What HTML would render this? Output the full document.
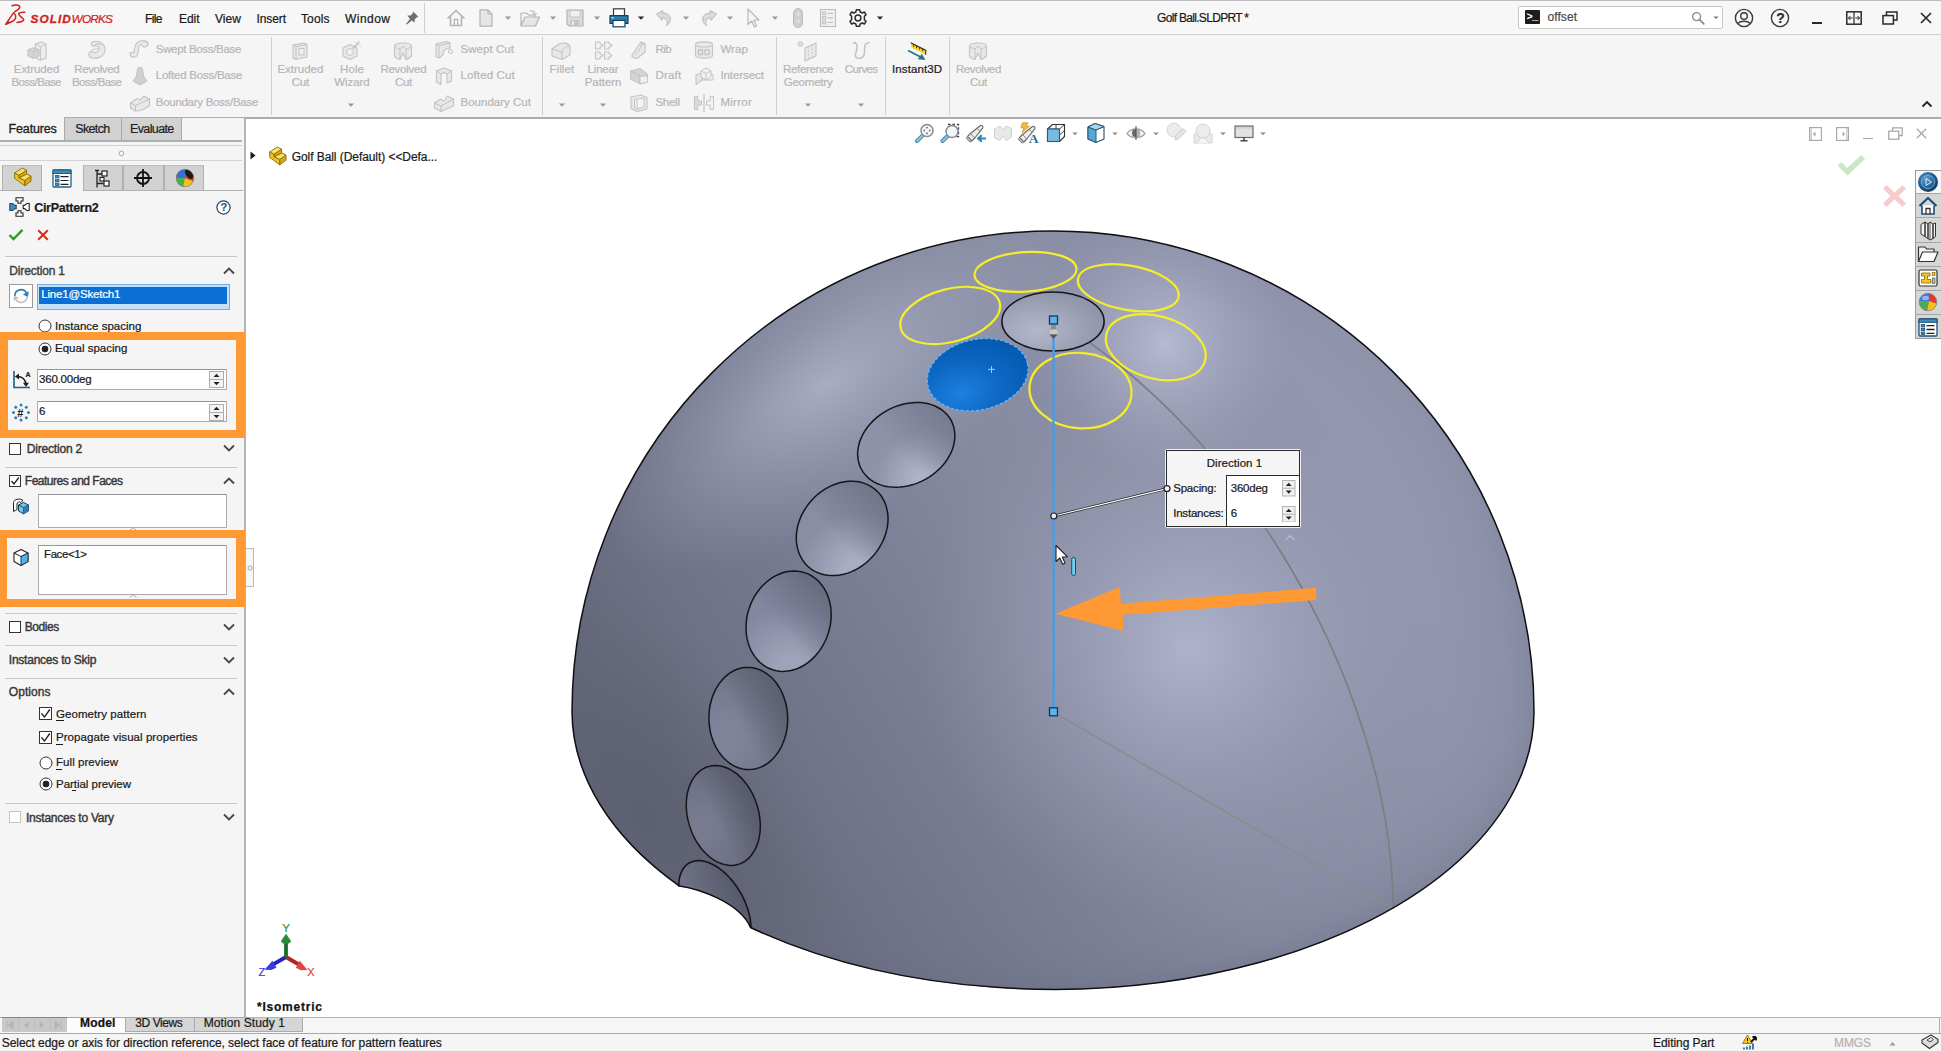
<!DOCTYPE html>
<html lang="en"><head><meta charset="utf-8"><title>Golf Ball.SLDPRT - SOLIDWORKS</title>
<style>
*{box-sizing:border-box;margin:0;padding:0}
html,body{width:1941px;height:1051px;overflow:hidden;background:#fff}
body{font-family:"Liberation Sans",sans-serif;font-size:12px;color:#1a1a1a;position:relative}
.abs,.t{position:absolute}
.t{white-space:nowrap;line-height:1;-webkit-text-stroke-width:0.22px}
#scene{position:absolute;left:0;top:0}
#titlebar{position:absolute;left:0;top:0;width:1941px;height:35px;background:#f7f7f7;border-top:1px solid #bdbdbd;border-bottom:1px solid #cfcfcf}
#ribbon{position:absolute;left:0;top:35px;width:1941px;height:84px;background:#f5f5f5;border-bottom:2px solid #adadad}
#left{position:absolute;left:0;top:118px;width:246px;height:898.5px;background:#f5f5f5;border-right:2px solid #b4b4b4}
#btabs{position:absolute;left:0;top:1016.5px;width:1941px;height:16.5px;background:#f6f6f6;border-top:1px solid #a8a8a8}
#status{position:absolute;left:0;top:1033px;width:1941px;height:18px;background:#f5f5f5;border-top:1px solid #a8a8a8}
.dis{color:#b7b7b7}
.menu{font-size:13px;color:#1a1a1a;top:12px}
.rt{font-size:12.5px;color:#b9b9b9;text-align:center;line-height:13.5px;white-space:nowrap}
.sep{position:absolute;width:1px;background:#cfcfcf}
.sec{font-weight:bold;font-size:12px;color:#3c3c3c}
.hl{position:absolute;left:4px;width:235px;height:1px;background:#c9c9c9}
.lbl{font-size:12px;color:#1a1a1a}
.inp{position:absolute;background:#fff;border:1px solid #a9a9ae;border-top-color:#94949a}
.chev{position:absolute;width:12px;height:8px}
</style></head><body>

<svg id="scene" width="1941" height="1051" viewBox="0 0 1941 1051">
<defs>
<linearGradient id="gBase" gradientUnits="userSpaceOnUse" x1="1430" y1="380" x2="610" y2="880">
<stop offset="0" stop-color="#969ab2"/><stop offset="0.45" stop-color="#858aa1"/><stop offset="0.8" stop-color="#6e7185"/><stop offset="1" stop-color="#5b5e6d"/>
</linearGradient>
<radialGradient id="gH1" gradientUnits="userSpaceOnUse" cx="1190" cy="648" r="275">
<stop offset="0" stop-color="#b2b6ce" stop-opacity="0.92"/><stop offset="0.45" stop-color="#a3a7bf" stop-opacity="0.5"/><stop offset="1" stop-color="#9397ae" stop-opacity="0"/>
</radialGradient>
<radialGradient id="gH2" gradientUnits="userSpaceOnUse" cx="1165" cy="345" r="130">
<stop offset="0" stop-color="#babed6" stop-opacity="0.9"/><stop offset="1" stop-color="#a0a4bc" stop-opacity="0"/>
</radialGradient>
<radialGradient id="gH3" gradientUnits="userSpaceOnUse" cx="0" cy="0" r="1" gradientTransform="translate(828 384) rotate(-33) scale(275 135)">
<stop offset="0" stop-color="#adb1c7" stop-opacity="0.9"/><stop offset="0.5" stop-color="#a2a6bc" stop-opacity="0.45"/><stop offset="1" stop-color="#9a9eb4" stop-opacity="0"/>
</radialGradient>
<radialGradient id="gD1" gradientUnits="userSpaceOnUse" cx="0" cy="0" r="1" gradientTransform="translate(640 820) rotate(-35) scale(160 300)">
<stop offset="0" stop-color="#555865" stop-opacity="0.6"/><stop offset="1" stop-color="#5b5e6e" stop-opacity="0"/>
</radialGradient>
<radialGradient id="gRim" gradientUnits="userSpaceOnUse" cx="0" cy="0" r="481" gradientTransform="translate(1053 712) scale(1 1.12)">
<stop offset="0" stop-color="#70748a" stop-opacity="0"/><stop offset="0.82" stop-color="#70748a" stop-opacity="0"/><stop offset="0.94" stop-color="#6c7086" stop-opacity="0.16"/><stop offset="1" stop-color="#666a80" stop-opacity="0.34"/>
</radialGradient>
<radialGradient id="gRim2" gradientUnits="userSpaceOnUse" cx="0" cy="0" r="481" gradientTransform="translate(1053 712) scale(1 0.5774)">
<stop offset="0" stop-color="#70748a" stop-opacity="0"/><stop offset="0.82" stop-color="#70748a" stop-opacity="0"/><stop offset="0.94" stop-color="#6c7086" stop-opacity="0.16"/><stop offset="1" stop-color="#666a80" stop-opacity="0.34"/>
</radialGradient>
<clipPath id="clipS"><path id="hemi" d="M572 712 A481 481 0 0 1 1534 712 A481 277.7 0 0 1 572 712Z"/></clipPath>
<linearGradient id="gDim" x1="0" y1="0" x2="1" y2="1">
<stop offset="0" stop-color="#7a7e92"/><stop offset="0.55" stop-color="#8b8fa6"/><stop offset="1" stop-color="#a9adc4"/>
</linearGradient>
<radialGradient id="gBlue" cx="0.3" cy="0.7" r="0.8">
<stop offset="0" stop-color="#1f80e0"/><stop offset="0.5" stop-color="#0d68c4"/><stop offset="1" stop-color="#0458ae"/>
</radialGradient>
<radialGradient id="gPole" cx="0.35" cy="0.65" r="0.7">
<stop offset="0" stop-color="#b4b8cc"/><stop offset="1" stop-color="#8f93a8"/>
</radialGradient>
</defs>
<g clip-path="url(#clipS)">
<rect x="560" y="220" width="990" height="780" fill="url(#gBase)"/>
<rect x="560" y="220" width="990" height="780" fill="url(#gD1)"/>
<rect x="560" y="220" width="990" height="780" fill="url(#gH3)"/>
<rect x="560" y="220" width="990" height="780" fill="url(#gH1)"/>
<rect x="560" y="220" width="990" height="780" fill="url(#gH2)"/>
<rect x="560" y="220" width="990" height="492" fill="url(#gRim)"/>
<rect x="560" y="712" width="990" height="290" fill="url(#gRim2)"/>
</g>
<path d="M750.5 927.5 C740 903 700 889 679.5 886 L670 900 L700 940 L745 945Z" fill="#fff"/>
<path d="M1053.0 319.3 L1070.8 330.1 L1088.6 341.9 L1106.2 354.8 L1123.7 368.7 L1141.0 383.5 L1158.1 399.2 L1174.9 415.7 L1191.3 433.1 L1207.4 451.2 L1223.1 470.1 L1238.2 489.6 L1252.9 509.7 L1267.0 530.4 L1280.6 551.5 L1293.5 573.1 L1305.8 595.1 L1317.3 617.5 L1328.2 640.0 L1338.2 662.8 L1347.6 685.7 L1356.0 708.7 L1363.7 731.7 L1370.5 754.6 L1376.5 777.4 L1381.5 800.0 L1385.7 822.4 L1388.9 844.5 L1391.3 866.2 L1392.7 887.5 L1393.1 908.4" fill="none" stroke="#7e7e82" stroke-width="1.7"/>
<path d="M1053 712 L1393.1 908.4" fill="none" stroke="#8c8c8a" stroke-width="1.6"/>
<ellipse cx="1053.0" cy="321.5" rx="51.1" ry="29.5" transform="rotate(0.0 1053.0 321.5)" fill="url(#gPole)" stroke="#15151a" stroke-width="1.6"/>
<ellipse cx="977.7" cy="374.7" rx="51.1" ry="35.3" transform="rotate(-12.6 977.7 374.7)" fill="url(#gBlue)" stroke="#5fb4ee" stroke-width="1.5" stroke-dasharray="3 2"/>
<radialGradient id="gd2" gradientUnits="userSpaceOnUse" cx="928.1" cy="483.0" r="53.0"><stop offset="0" stop-color="#b0b4ca"/><stop offset="0.2" stop-color="#b0b4ca"/><stop offset="1" stop-color="#8f93a9"/></radialGradient>
<linearGradient id="go2" gradientUnits="userSpaceOnUse" x1="942.7" y1="413.1" x2="900.8" y2="453.9"><stop offset="0" stop-color="#787c91" stop-opacity="1"/><stop offset="0.45" stop-color="#787c91" stop-opacity="0.55"/><stop offset="1" stop-color="#787c91" stop-opacity="0"/></linearGradient>
<path d="M938.8 408.0 L935.6 406.3 L932.1 404.9 L928.4 403.8 L924.5 403.1 L920.5 402.6 L916.4 402.5 L912.2 402.7 L908.0 403.2 L903.7 404.0 L899.5 405.2 L895.3 406.6 L891.2 408.4 L887.3 410.4 L883.4 412.6 L879.8 415.2 L876.3 417.9 L873.1 420.9 L870.1 424.0 L867.4 427.3 L865.0 430.7 L862.9 434.3 L861.2 437.9 L859.7 441.6 L858.7 445.3 L858.0 449.0 L857.6 452.6 L857.7 456.2 L858.1 459.7 L858.9 463.1 L860.0 466.4 L861.5 469.5 L863.3 472.4 L865.5 475.1 L867.9 477.6 L870.7 479.8 L873.7 481.8 L877.0 483.5 L880.5 484.9 L884.2 485.9 L888.0 486.7 L892.0 487.1 L896.1 487.3 L900.3 487.1 L904.6 486.6 L908.8 485.7 L913.0 484.6 L917.2 483.1 L921.3 481.4 L925.3 479.4 L929.1 477.1 L932.7 474.6 L936.2 471.8 L939.4 468.9 L942.4 465.7 L945.1 462.5 L947.5 459.0 L949.6 455.5 L951.4 451.9 L952.8 448.2 L953.8 444.5 L954.5 440.8 L954.9 437.1 L954.8 433.5 L954.4 430.0 L953.7 426.6 L952.5 423.4 L951.1 420.2 L949.2 417.3 L947.1 414.6 L944.6 412.2 L941.9 409.9Z" fill="url(#gd2)"/>
<path d="M938.8 408.0 L935.6 406.3 L932.1 404.9 L928.4 403.8 L924.5 403.1 L920.5 402.6 L916.4 402.5 L912.2 402.7 L908.0 403.2 L903.7 404.0 L899.5 405.2 L895.3 406.6 L891.2 408.4 L887.3 410.4 L883.4 412.6 L879.8 415.2 L876.3 417.9 L873.1 420.9 L870.1 424.0 L867.4 427.3 L865.0 430.7 L862.9 434.3 L861.2 437.9 L859.7 441.6 L858.7 445.3 L858.0 449.0 L857.6 452.6 L857.7 456.2 L858.1 459.7 L858.9 463.1 L860.0 466.4 L861.5 469.5 L863.3 472.4 L865.5 475.1 L867.9 477.6 L870.7 479.8 L873.7 481.8 L877.0 483.5 L880.5 484.9 L884.2 485.9 L888.0 486.7 L892.0 487.1 L896.1 487.3 L900.3 487.1 L904.6 486.6 L908.8 485.7 L913.0 484.6 L917.2 483.1 L921.3 481.4 L925.3 479.4 L929.1 477.1 L932.7 474.6 L936.2 471.8 L939.4 468.9 L942.4 465.7 L945.1 462.5 L947.5 459.0 L949.6 455.5 L951.4 451.9 L952.8 448.2 L953.8 444.5 L954.5 440.8 L954.9 437.1 L954.8 433.5 L954.4 430.0 L953.7 426.6 L952.5 423.4 L951.1 420.2 L949.2 417.3 L947.1 414.6 L944.6 412.2 L941.9 409.9Z" fill="url(#go2)" stroke="#15151a" stroke-width="1.5"/>
<radialGradient id="gd3" gradientUnits="userSpaceOnUse" cx="858.2" cy="571.8" r="59.0"><stop offset="0" stop-color="#aaaec4"/><stop offset="0.2" stop-color="#aaaec4"/><stop offset="1" stop-color="#8a8ea4"/></radialGradient>
<linearGradient id="go3" gradientUnits="userSpaceOnUse" x1="878.8" y1="495.4" x2="836.6" y2="538.1"><stop offset="0" stop-color="#72768a" stop-opacity="1"/><stop offset="0.45" stop-color="#72768a" stop-opacity="0.55"/><stop offset="1" stop-color="#72768a" stop-opacity="0"/></linearGradient>
<path d="M870.4 486.1 L867.1 484.4 L863.7 483.1 L860.1 482.1 L856.3 481.5 L852.5 481.2 L848.5 481.3 L844.6 481.8 L840.6 482.6 L836.6 483.7 L832.6 485.2 L828.7 487.1 L825.0 489.2 L821.3 491.6 L817.8 494.3 L814.5 497.3 L811.5 500.5 L808.6 503.9 L806.0 507.6 L803.7 511.3 L801.6 515.2 L799.9 519.2 L798.5 523.3 L797.4 527.4 L796.7 531.5 L796.3 535.6 L796.3 539.7 L796.6 543.6 L797.3 547.4 L798.3 551.1 L799.6 554.7 L801.3 558.0 L803.2 561.1 L805.5 563.9 L808.0 566.5 L810.8 568.8 L813.9 570.8 L817.1 572.4 L820.6 573.7 L824.2 574.7 L827.9 575.3 L831.8 575.6 L835.7 575.5 L839.7 575.1 L843.7 574.3 L847.7 573.1 L851.7 571.6 L855.5 569.8 L859.3 567.7 L863.0 565.2 L866.4 562.5 L869.7 559.5 L872.8 556.3 L875.7 552.9 L878.3 549.3 L880.6 545.5 L882.6 541.6 L884.4 537.6 L885.8 533.6 L886.8 529.4 L887.6 525.3 L888.0 521.2 L888.0 517.2 L887.7 513.2 L887.0 509.4 L886.0 505.7 L884.7 502.2 L883.0 498.9 L881.1 495.8 L878.8 492.9 L876.2 490.4 L873.4 488.1Z" fill="url(#gd3)"/>
<path d="M870.4 486.1 L867.1 484.4 L863.7 483.1 L860.1 482.1 L856.3 481.5 L852.5 481.2 L848.5 481.3 L844.6 481.8 L840.6 482.6 L836.6 483.7 L832.6 485.2 L828.7 487.1 L825.0 489.2 L821.3 491.6 L817.8 494.3 L814.5 497.3 L811.5 500.5 L808.6 503.9 L806.0 507.6 L803.7 511.3 L801.6 515.2 L799.9 519.2 L798.5 523.3 L797.4 527.4 L796.7 531.5 L796.3 535.6 L796.3 539.7 L796.6 543.6 L797.3 547.4 L798.3 551.1 L799.6 554.7 L801.3 558.0 L803.2 561.1 L805.5 563.9 L808.0 566.5 L810.8 568.8 L813.9 570.8 L817.1 572.4 L820.6 573.7 L824.2 574.7 L827.9 575.3 L831.8 575.6 L835.7 575.5 L839.7 575.1 L843.7 574.3 L847.7 573.1 L851.7 571.6 L855.5 569.8 L859.3 567.7 L863.0 565.2 L866.4 562.5 L869.7 559.5 L872.8 556.3 L875.7 552.9 L878.3 549.3 L880.6 545.5 L882.6 541.6 L884.4 537.6 L885.8 533.6 L886.8 529.4 L887.6 525.3 L888.0 521.2 L888.0 517.2 L887.7 513.2 L887.0 509.4 L886.0 505.7 L884.7 502.2 L883.0 498.9 L881.1 495.8 L878.8 492.9 L876.2 490.4 L873.4 488.1Z" fill="url(#go3)" stroke="#15151a" stroke-width="1.5"/>
<radialGradient id="gd4" gradientUnits="userSpaceOnUse" cx="790.7" cy="668.8" r="62.7"><stop offset="0" stop-color="#9fa3b9"/><stop offset="0.2" stop-color="#9fa3b9"/><stop offset="1" stop-color="#8387a0"/></radialGradient>
<linearGradient id="go4" gradientUnits="userSpaceOnUse" x1="824.8" y1="591.1" x2="783.2" y2="630.7"><stop offset="0" stop-color="#696c80" stop-opacity="1"/><stop offset="0.45" stop-color="#696c80" stop-opacity="0.55"/><stop offset="1" stop-color="#696c80" stop-opacity="0"/></linearGradient>
<path d="M811.1 575.5 L807.9 573.9 L804.5 572.6 L801.0 571.7 L797.4 571.2 L793.7 571.0 L790.0 571.2 L786.3 571.8 L782.6 572.8 L779.0 574.2 L775.4 575.9 L771.9 577.9 L768.6 580.3 L765.4 583.0 L762.3 586.0 L759.5 589.2 L756.9 592.7 L754.5 596.4 L752.4 600.3 L750.6 604.4 L749.1 608.6 L747.8 612.8 L746.9 617.2 L746.3 621.6 L746.0 625.9 L746.1 630.3 L746.4 634.5 L747.1 638.7 L748.1 642.7 L749.4 646.6 L751.0 650.3 L752.9 653.7 L755.1 656.9 L757.5 659.9 L760.1 662.5 L763.0 664.8 L766.1 666.8 L769.3 668.5 L772.7 669.7 L776.2 670.7 L779.8 671.2 L783.4 671.4 L787.1 671.1 L790.9 670.5 L794.6 669.6 L798.2 668.2 L801.8 666.5 L805.3 664.4 L808.6 662.1 L811.8 659.4 L814.8 656.4 L817.7 653.1 L820.3 649.7 L822.6 645.9 L824.7 642.0 L826.6 638.0 L828.1 633.8 L829.3 629.5 L830.3 625.2 L830.9 620.8 L831.2 616.4 L831.1 612.1 L830.8 607.8 L830.1 603.7 L829.1 599.6 L827.8 595.8 L826.2 592.1 L824.3 588.6 L822.1 585.4 L819.7 582.5 L817.1 579.9 L814.2 577.5Z" fill="url(#gd4)"/>
<path d="M811.1 575.5 L807.9 573.9 L804.5 572.6 L801.0 571.7 L797.4 571.2 L793.7 571.0 L790.0 571.2 L786.3 571.8 L782.6 572.8 L779.0 574.2 L775.4 575.9 L771.9 577.9 L768.6 580.3 L765.4 583.0 L762.3 586.0 L759.5 589.2 L756.9 592.7 L754.5 596.4 L752.4 600.3 L750.6 604.4 L749.1 608.6 L747.8 612.8 L746.9 617.2 L746.3 621.6 L746.0 625.9 L746.1 630.3 L746.4 634.5 L747.1 638.7 L748.1 642.7 L749.4 646.6 L751.0 650.3 L752.9 653.7 L755.1 656.9 L757.5 659.9 L760.1 662.5 L763.0 664.8 L766.1 666.8 L769.3 668.5 L772.7 669.7 L776.2 670.7 L779.8 671.2 L783.4 671.4 L787.1 671.1 L790.9 670.5 L794.6 669.6 L798.2 668.2 L801.8 666.5 L805.3 664.4 L808.6 662.1 L811.8 659.4 L814.8 656.4 L817.7 653.1 L820.3 649.7 L822.6 645.9 L824.7 642.0 L826.6 638.0 L828.1 633.8 L829.3 629.5 L830.3 625.2 L830.9 620.8 L831.2 616.4 L831.1 612.1 L830.8 607.8 L830.1 603.7 L829.1 599.6 L827.8 595.8 L826.2 592.1 L824.3 588.6 L822.1 585.4 L819.7 582.5 L817.1 579.9 L814.2 577.5Z" fill="url(#go4)" stroke="#15151a" stroke-width="1.5"/>
<radialGradient id="gd5" gradientUnits="userSpaceOnUse" cx="724.7" cy="736.4" r="63.9"><stop offset="0" stop-color="#80849a"/><stop offset="0.2" stop-color="#80849a"/><stop offset="1" stop-color="#72758a"/></radialGradient>
<linearGradient id="go5" gradientUnits="userSpaceOnUse" x1="785.7" y1="703.2" x2="742.7" y2="725.9"><stop offset="0" stop-color="#5d6071" stop-opacity="1"/><stop offset="0.45" stop-color="#5d6071" stop-opacity="0.55"/><stop offset="1" stop-color="#5d6071" stop-opacity="0"/></linearGradient>
<path d="M764.0 671.8 L760.8 670.2 L757.5 668.9 L754.1 668.0 L750.7 667.5 L747.2 667.4 L743.8 667.6 L740.4 668.3 L737.1 669.3 L733.8 670.7 L730.7 672.5 L727.7 674.6 L724.8 677.1 L722.2 679.9 L719.7 682.9 L717.4 686.3 L715.4 689.8 L713.7 693.6 L712.2 697.6 L710.9 701.8 L710.0 706.0 L709.3 710.4 L709.0 714.8 L708.9 719.3 L709.2 723.7 L709.7 728.1 L710.5 732.5 L711.7 736.7 L713.1 740.8 L714.7 744.7 L716.6 748.5 L718.8 751.9 L721.2 755.2 L723.8 758.1 L726.6 760.8 L729.5 763.1 L732.6 765.1 L735.8 766.8 L739.1 768.1 L742.5 768.9 L745.9 769.5 L749.4 769.6 L752.8 769.3 L756.2 768.7 L759.5 767.6 L762.8 766.2 L765.9 764.5 L768.9 762.3 L771.8 759.9 L774.4 757.1 L776.9 754.0 L779.2 750.7 L781.2 747.1 L782.9 743.3 L784.4 739.3 L785.7 735.2 L786.6 730.9 L787.3 726.6 L787.6 722.1 L787.7 717.7 L787.4 713.2 L786.9 708.8 L786.1 704.5 L784.9 700.2 L783.5 696.2 L781.9 692.2 L780.0 688.5 L777.8 685.0 L775.4 681.8 L772.8 678.8 L770.0 676.2 L767.1 673.8Z" fill="url(#gd5)"/>
<path d="M764.0 671.8 L760.8 670.2 L757.5 668.9 L754.1 668.0 L750.7 667.5 L747.2 667.4 L743.8 667.6 L740.4 668.3 L737.1 669.3 L733.8 670.7 L730.7 672.5 L727.7 674.6 L724.8 677.1 L722.2 679.9 L719.7 682.9 L717.4 686.3 L715.4 689.8 L713.7 693.6 L712.2 697.6 L710.9 701.8 L710.0 706.0 L709.3 710.4 L709.0 714.8 L708.9 719.3 L709.2 723.7 L709.7 728.1 L710.5 732.5 L711.7 736.7 L713.1 740.8 L714.7 744.7 L716.6 748.5 L718.8 751.9 L721.2 755.2 L723.8 758.1 L726.6 760.8 L729.5 763.1 L732.6 765.1 L735.8 766.8 L739.1 768.1 L742.5 768.9 L745.9 769.5 L749.4 769.6 L752.8 769.3 L756.2 768.7 L759.5 767.6 L762.8 766.2 L765.9 764.5 L768.9 762.3 L771.8 759.9 L774.4 757.1 L776.9 754.0 L779.2 750.7 L781.2 747.1 L782.9 743.3 L784.4 739.3 L785.7 735.2 L786.6 730.9 L787.3 726.6 L787.6 722.1 L787.7 717.7 L787.4 713.2 L786.9 708.8 L786.1 704.5 L784.9 700.2 L783.5 696.2 L781.9 692.2 L780.0 688.5 L777.8 685.0 L775.4 681.8 L772.8 678.8 L770.0 676.2 L767.1 673.8Z" fill="url(#go5)" stroke="#15151a" stroke-width="1.5"/>
<radialGradient id="gd6" gradientUnits="userSpaceOnUse" cx="701.1" cy="827.9" r="62.4"><stop offset="0" stop-color="#787b90"/><stop offset="0.2" stop-color="#787b90"/><stop offset="1" stop-color="#6a6d80"/></radialGradient>
<linearGradient id="go6" gradientUnits="userSpaceOnUse" x1="758.4" y1="803.0" x2="718.0" y2="822.3"><stop offset="0" stop-color="#565969" stop-opacity="1"/><stop offset="0.45" stop-color="#565969" stop-opacity="0.55"/><stop offset="1" stop-color="#565969" stop-opacity="0"/></linearGradient>
<path d="M731.3 770.1 L728.1 768.5 L724.9 767.2 L721.7 766.3 L718.5 765.7 L715.3 765.6 L712.2 765.8 L709.1 766.4 L706.2 767.3 L703.4 768.7 L700.8 770.3 L698.3 772.4 L696.0 774.7 L693.9 777.4 L692.1 780.4 L690.5 783.6 L689.1 787.0 L688.0 790.7 L687.1 794.6 L686.6 798.6 L686.3 802.8 L686.3 807.0 L686.6 811.4 L687.1 815.7 L688.0 820.1 L689.1 824.4 L690.4 828.6 L692.0 832.8 L693.9 836.8 L696.0 840.6 L698.3 844.3 L700.7 847.7 L703.4 850.9 L706.2 853.8 L709.1 856.5 L712.1 858.8 L715.2 860.8 L718.4 862.4 L721.6 863.7 L724.9 864.6 L728.1 865.2 L731.3 865.4 L734.4 865.2 L737.4 864.6 L740.4 863.6 L743.2 862.3 L745.8 860.6 L748.3 858.6 L750.6 856.2 L752.6 853.5 L754.5 850.6 L756.1 847.4 L757.5 843.9 L758.6 840.2 L759.4 836.3 L760.0 832.3 L760.3 828.1 L760.3 823.9 L760.0 819.6 L759.4 815.2 L758.6 810.9 L757.5 806.6 L756.1 802.3 L754.5 798.2 L752.7 794.2 L750.6 790.3 L748.3 786.6 L745.8 783.2 L743.2 780.0 L740.4 777.1 L737.5 774.4 L734.4 772.1Z" fill="url(#gd6)"/>
<path d="M731.3 770.1 L728.1 768.5 L724.9 767.2 L721.7 766.3 L718.5 765.7 L715.3 765.6 L712.2 765.8 L709.1 766.4 L706.2 767.3 L703.4 768.7 L700.8 770.3 L698.3 772.4 L696.0 774.7 L693.9 777.4 L692.1 780.4 L690.5 783.6 L689.1 787.0 L688.0 790.7 L687.1 794.6 L686.6 798.6 L686.3 802.8 L686.3 807.0 L686.6 811.4 L687.1 815.7 L688.0 820.1 L689.1 824.4 L690.4 828.6 L692.0 832.8 L693.9 836.8 L696.0 840.6 L698.3 844.3 L700.7 847.7 L703.4 850.9 L706.2 853.8 L709.1 856.5 L712.1 858.8 L715.2 860.8 L718.4 862.4 L721.6 863.7 L724.9 864.6 L728.1 865.2 L731.3 865.4 L734.4 865.2 L737.4 864.6 L740.4 863.6 L743.2 862.3 L745.8 860.6 L748.3 858.6 L750.6 856.2 L752.6 853.5 L754.5 850.6 L756.1 847.4 L757.5 843.9 L758.6 840.2 L759.4 836.3 L760.0 832.3 L760.3 828.1 L760.3 823.9 L760.0 819.6 L759.4 815.2 L758.6 810.9 L757.5 806.6 L756.1 802.3 L754.5 798.2 L752.7 794.2 L750.6 790.3 L748.3 786.6 L745.8 783.2 L743.2 780.0 L740.4 777.1 L737.5 774.4 L734.4 772.1Z" fill="url(#go6)" stroke="#15151a" stroke-width="1.5"/>
<linearGradient id="gd7" gradientUnits="userSpaceOnUse" x1="745" y1="880" x2="690" y2="900"><stop offset="0" stop-color="#535667"/><stop offset="0.5" stop-color="#606375"/><stop offset="1" stop-color="#6f7286"/></linearGradient>
<path d="M750.9 928.1 L750.9 926.3 L750.8 924.4 L750.6 922.5 L750.4 920.6 L750.1 918.6 L749.7 916.6 L749.3 914.6 L748.8 912.6 L748.2 910.6 L747.6 908.5 L746.9 906.5 L746.1 904.5 L745.3 902.4 L744.4 900.4 L743.5 898.4 L742.5 896.4 L741.5 894.4 L740.4 892.5 L739.2 890.6 L738.0 888.7 L736.8 886.8 L735.5 885.0 L734.2 883.3 L732.9 881.5 L731.5 879.9 L730.1 878.3 L728.6 876.7 L727.2 875.2 L725.7 873.7 L724.2 872.3 L722.6 871.0 L721.1 869.8 L719.5 868.6 L718.0 867.5 L716.4 866.5 L714.8 865.5 L713.2 864.7 L711.7 863.9 L710.1 863.2 L708.5 862.5 L707.0 862.0 L705.5 861.5 L703.9 861.2 L702.4 860.9 L701.0 860.7 L699.5 860.6 L698.1 860.6 L696.7 860.7 L695.4 860.8 L694.1 861.1 L692.8 861.4 L691.6 861.9 L690.4 862.4 L689.3 863.0 L688.2 863.7 L687.1 864.4 L686.1 865.3 L685.2 866.2 L684.3 867.2 L683.5 868.3 L682.7 869.5 L682.1 870.7 L681.4 872.0 L680.8 873.4 L680.3 874.8 L679.9 876.3 L679.5 877.9 L679.2 879.5 L679.0 881.1 L678.8 882.8 L678.7 884.6 L678.7 886.4 C700 889 740 903 750.5 927 Z" fill="url(#gd7)" stroke="none"/>
<path d="M750.9 928.1 L750.9 926.3 L750.8 924.4 L750.6 922.5 L750.4 920.6 L750.1 918.6 L749.7 916.6 L749.3 914.6 L748.8 912.6 L748.2 910.6 L747.6 908.5 L746.9 906.5 L746.1 904.5 L745.3 902.4 L744.4 900.4 L743.5 898.4 L742.5 896.4 L741.5 894.4 L740.4 892.5 L739.2 890.6 L738.0 888.7 L736.8 886.8 L735.5 885.0 L734.2 883.3 L732.9 881.5 L731.5 879.9 L730.1 878.3 L728.6 876.7 L727.2 875.2 L725.7 873.7 L724.2 872.3 L722.6 871.0 L721.1 869.8 L719.5 868.6 L718.0 867.5 L716.4 866.5 L714.8 865.5 L713.2 864.7 L711.7 863.9 L710.1 863.2 L708.5 862.5 L707.0 862.0 L705.5 861.5 L703.9 861.2 L702.4 860.9 L701.0 860.7 L699.5 860.6 L698.1 860.6 L696.7 860.7 L695.4 860.8 L694.1 861.1 L692.8 861.4 L691.6 861.9 L690.4 862.4 L689.3 863.0 L688.2 863.7 L687.1 864.4 L686.1 865.3 L685.2 866.2 L684.3 867.2 L683.5 868.3 L682.7 869.5 L682.1 870.7 L681.4 872.0 L680.8 873.4 L680.3 874.8 L679.9 876.3 L679.5 877.9 L679.2 879.5 L679.0 881.1 L678.8 882.8 L678.7 884.6 L678.7 886.4" fill="none" stroke="#15151a" stroke-width="1.6"/>
<ellipse cx="1080.5" cy="390.6" rx="51.1" ry="37.7" transform="rotate(4.9 1080.5 390.6)" fill="none" stroke="#f4ee2a" stroke-width="2.2"/>
<ellipse cx="1155.8" cy="347.2" rx="51.1" ry="31.2" transform="rotate(15.7 1155.8 347.2)" fill="none" stroke="#f4ee2a" stroke-width="2.2"/>
<ellipse cx="1128.3" cy="287.8" rx="51.1" ry="22.2" transform="rotate(10.1 1128.3 287.8)" fill="none" stroke="#f4ee2a" stroke-width="2.2"/>
<ellipse cx="1025.5" cy="271.9" rx="51.1" ry="19.8" transform="rotate(-3.6 1025.5 271.9)" fill="none" stroke="#f4ee2a" stroke-width="2.2"/>
<ellipse cx="950.2" cy="315.4" rx="51.1" ry="26.4" transform="rotate(-14.5 950.2 315.4)" fill="none" stroke="#f4ee2a" stroke-width="2.2"/>
<path d="M572 712 A481 481 0 0 1 1534 712 A481 277.7 0 0 1 750.5 927.5 C740 903 700 889 679.5 886 A481 277.7 0 0 1 572 712Z" fill="none" stroke="#101014" stroke-width="1.5"/>
<path d="M1053.5 338 V708" stroke="#4a9be6" stroke-width="2.4"/>
</svg>
<div id="titlebar"></div><div id="ribbon"></div>
<svg class="abs" style="left:0;top:0" width="30" height="30" viewBox="0 0 30 30"><g fill="none" stroke="#d0241c" stroke-width="1.5" stroke-linecap="round" stroke-linejoin="round">
<path d="M12 5.800 C15 4.500 19.400 4.700 19.800 7 C20 8.600 17 10.400 14.700 11.800"/>
<path d="M13.500 12.800 L5.600 24.400 C9 22.800 13 21.500 14.800 19.400 C16.500 17.300 15.700 14.200 13.500 12.800Z"/>
<path d="M24.800 12.300 C22.500 12.200 19.500 12.500 18.700 13.700 C17.900 15.300 22.800 17.600 23.600 19.500 C24.100 21.200 20.200 22.300 17 22.500"/></g><path d="M5.600 24.400 L8.200 20.400 L9.600 22.400Z" fill="#d0241c"/></svg>
<div class="t " style="left:30.6px;top:13.7px;font-size:11.8px;color:#d0241c;letter-spacing:1.036px;font-weight:bold;font-style:italic;-webkit-text-stroke:0.3px #d0241c;">SOLID</div>
<div class="t " style="left:71.6px;top:13.7px;font-size:11.8px;color:#d0241c;letter-spacing:-0.795px;font-style:italic;">WORKS</div>
<div class="t " style="left:145.0px;top:13.0px;font-size:12px;color:#1a1a1a;letter-spacing:-0.612px;">File</div>
<div class="t " style="left:179.0px;top:13.0px;font-size:12px;color:#1a1a1a;letter-spacing:-0.059px;">Edit</div>
<div class="t " style="left:215.0px;top:13.0px;font-size:12px;color:#1a1a1a;letter-spacing:0.069px;">View</div>
<div class="t " style="left:256.5px;top:13.0px;font-size:12px;color:#1a1a1a;letter-spacing:-0.102px;">Insert</div>
<div class="t " style="left:301.0px;top:13.0px;font-size:12px;color:#1a1a1a;letter-spacing:0.122px;">Tools</div>
<div class="t " style="left:345.0px;top:13.0px;font-size:12px;color:#1a1a1a;letter-spacing:0.464px;">Window</div>
<svg class="abs" style="left:404px;top:10px" width="16" height="16" viewBox="0 0 16 16"><path d="M9.2 1.6 L14.4 6.8 L12.6 7.4 L10.6 9.6 L10.8 12.6 L7.6 10.4 L3 14.6 L2 14 L6 9 L3.4 5.4 L6.6 5.6 L8.6 3.4Z" fill="#6e6e6e"/></svg>
<div class="sep" style="left:424px;top:3px;height:30px"></div>
<svg class="abs" style="left:446.0px;top:8.0px" width="20" height="20" viewBox="0 0 20 20"><path d="M2 10 L10 2.5 L18 10 M4.5 8.5 V17.5 H15.5 V8.5" fill="none" stroke="#b4b4b4" stroke-width="1.6" stroke-linejoin="round" stroke-linecap="round"/><path d="M8.3 17 V11.5 H11.7 V17" fill="none" stroke="#b4b4b4" stroke-width="1.3"/></svg>
<svg class="abs" style="left:476.0px;top:8.0px" width="20" height="20" viewBox="0 0 20 20"><path d="M4 1.8 H12 L16 5.8 V18.2 H4Z M12 1.8 V5.8 H16" fill="#e6e6e6" stroke="#b4b4b4" stroke-width="1.2" stroke-linejoin="round"/></svg>
<svg class="abs" style="left:503.7px;top:16.0px" width="8" height="5" viewBox="0 0 8 5"><path d="M0.8 0.5 H7.2 L4 3.7Z" fill="#9a9a9a"/></svg>
<svg class="abs" style="left:519.0px;top:8.0px" width="22" height="20" viewBox="0 0 22 20"><path d="M2 5 H8 L9.5 7 H16 V9 M2 5 V18 H16.5 L20.5 9 H6 L2 18" fill="#e6e6e6" stroke="#b4b4b4" stroke-width="1.2" stroke-linejoin="round"/><path d="M11 2.5 C14 1.8 16 3 16.5 5.5 L18.5 5 L16 8.5 L13 5.8 L15 5.6 C14.5 4 13 3.4 11 4Z" fill="#c6c6c6"/></svg>
<svg class="abs" style="left:548.5px;top:16.0px" width="8" height="5" viewBox="0 0 8 5"><path d="M0.8 0.5 H7.2 L4 3.7Z" fill="#9a9a9a"/></svg>
<svg class="abs" style="left:565.0px;top:8.0px" width="20" height="20" viewBox="0 0 20 20"><path d="M2 2 H18 V18 H4 L2 16Z" fill="#dcdcdc" stroke="#b4b4b4" stroke-width="1.2"/><rect x="5" y="2.6" width="10" height="6.4" fill="#f1f1f1" stroke="#bdbdbd" stroke-width="0.8"/><rect x="5.5" y="12" width="9" height="6" fill="#c4c4c4"/><rect x="7" y="13.3" width="2" height="3.6" fill="#ececec"/></svg>
<svg class="abs" style="left:592.6px;top:16.0px" width="8" height="5" viewBox="0 0 8 5"><path d="M0.8 0.5 H7.2 L4 3.7Z" fill="#9a9a9a"/></svg>
<svg class="abs" style="left:608.0px;top:7.0px" width="22" height="22" viewBox="0 0 22 22"><rect x="5.5" y="1.8" width="11" height="7" fill="#fdfdfd" stroke="#3a3a3a" stroke-width="1.2"/><path d="M2 8.6 H20 V16.4 H2Z" fill="#2d7fb0" stroke="#16405c" stroke-width="1.2" stroke-linejoin="round"/><rect x="5" y="13.4" width="12" height="6.4" fill="#fdfdfd" stroke="#16405c" stroke-width="1.2"/><rect x="3.6" y="10.2" width="2" height="1.4" fill="#d8ecf6"/></svg>
<svg class="abs" style="left:637.0px;top:16.0px" width="8" height="5" viewBox="0 0 8 5"><path d="M0.8 0.5 H7.2 L4 3.7Z" fill="#2a2a2a"/></svg>
<svg class="abs" style="left:654.0px;top:8.0px" width="20" height="20" viewBox="0 0 20 20"><path d="M2.5 6 L9 2.6 L8.6 5.2 C14 5 17.5 8.4 16 13.2 C15.4 15 14.2 16.6 12.4 17.6 C14.2 14.6 13.4 10.4 8.2 9.6 L8 12.4Z" fill="#dcdcdc" stroke="#b8b8b8" stroke-width="1"/></svg>
<svg class="abs" style="left:681.5px;top:16.0px" width="8" height="5" viewBox="0 0 8 5"><path d="M0.8 0.5 H7.2 L4 3.7Z" fill="#9a9a9a"/></svg>
<svg class="abs" style="left:698.7px;top:8.0px" width="20" height="20" viewBox="0 0 20 20"><path d="M17.5 6 L11 2.6 L11.4 5.2 C6 5 2.5 8.4 4 13.2 C4.6 15 5.8 16.6 7.6 17.6 C5.8 14.6 6.6 10.4 11.8 9.6 L12 12.4Z" fill="#dcdcdc" stroke="#b8b8b8" stroke-width="1"/></svg>
<svg class="abs" style="left:726.0px;top:16.0px" width="8" height="5" viewBox="0 0 8 5"><path d="M0.8 0.5 H7.2 L4 3.7Z" fill="#9a9a9a"/></svg>
<svg class="abs" style="left:743.5px;top:7.0px" width="18" height="22" viewBox="0 0 18 22"><path d="M4 2 L4 17.5 L7.8 14 L10.4 20 L12.6 19 L10 13.2 L15 13Z" fill="#f4f4f4" stroke="#b8b8b8" stroke-width="1.2" stroke-linejoin="round"/></svg>
<svg class="abs" style="left:770.6px;top:16.0px" width="8" height="5" viewBox="0 0 8 5"><path d="M0.8 0.5 H7.2 L4 3.7Z" fill="#9a9a9a"/></svg>
<svg class="abs" style="left:791.6px;top:7.0px" width="12" height="22" viewBox="0 0 12 22"><rect x="1.5" y="1.5" width="9" height="19" rx="4.5" fill="#cfcfcf" stroke="#bcbcbc" stroke-width="1"/><circle cx="6" cy="7" r="2" fill="#dedede"/><circle cx="6" cy="14" r="2" fill="#dedede"/></svg>
<svg class="abs" style="left:818.7px;top:8.0px" width="18" height="20" viewBox="0 0 18 20"><rect x="1.5" y="1.5" width="15" height="17" fill="#f0f0f0" stroke="#bcbcbc" stroke-width="1.1"/><g fill="none" stroke="#bcbcbc" stroke-width="1"><rect x="3.6" y="4" width="3" height="2.6"/><rect x="3.6" y="8.6" width="3" height="2.6"/><rect x="3.6" y="13.2" width="3" height="2.6"/><path d="M8.4 5.3 H14.2 M8.4 9.9 H14.2 M8.4 14.5 H14.2"/></g></svg>
<svg class="abs" style="left:848.0px;top:8.0px" width="20" height="20" viewBox="0 0 20 20"><g transform="translate(10 10)" fill="none" stroke="#2e2e2e" stroke-width="1.5"><circle r="2.9"/><path d="M-1.6 -8.2 H1.6 L2.2 -6 L4.2 -5 L6.4 -6 L8 -3.4 L6.4 -1.8 V1.8 L8 3.4 L6.4 6 L4.2 5 L2.2 6 L1.6 8.2 H-1.6 L-2.2 6 L-4.2 5 L-6.4 6 L-8 3.4 L-6.4 1.8 V-1.8 L-8 -3.4 L-6.4 -6 L-4.2 -5 L-2.2 -6Z" stroke-linejoin="round"/></g></svg>
<svg class="abs" style="left:876.0px;top:16.0px" width="8" height="5" viewBox="0 0 8 5"><path d="M0.8 0.5 H7.2 L4 3.7Z" fill="#2a2a2a"/></svg>
<div class="t " style="left:1157.0px;top:12.4px;font-size:12px;color:#1a1a1a;letter-spacing:-0.682px;">Golf Ball.SLDPRT *</div>
<div class="abs" style="left:1518px;top:6px;width:205px;height:23px;background:#fff;border:1px solid #c8c8c8;border-radius:2px"></div>
<svg class="abs" style="left:1525px;top:10px" width="15" height="14" viewBox="0 0 15 14"><rect width="15" height="14" rx="1" fill="#1d1d1d"/><text x="1.600" y="10.600" font-family="Liberation Mono,monospace" font-size="10.500" font-weight="bold" fill="#fff" letter-spacing="-0.8" dy="-0.7">&gt;_</text></svg>
<div class="t " style="left:1547.5px;top:11.2px;font-size:12px;color:#4a4a4a;letter-spacing:0.074px;">offset</div>
<svg class="abs" style="left:1691.0px;top:10.5px" width="14" height="14" viewBox="0 0 14 14"><circle cx="5.6" cy="5.6" r="4" fill="none" stroke="#8c8c8c" stroke-width="1.4"/><path d="M8.6 8.6 L12.8 12.8" stroke="#8c8c8c" stroke-width="1.8" stroke-linecap="round"/></svg>
<svg class="abs" style="left:1712.0px;top:16.0px" width="8" height="5" viewBox="0 0 8 5"><path d="M1.4 0.5 H6.6 L4 3.1Z" fill="#777"/></svg>
<svg class="abs" style="left:1733.5px;top:8.0px" width="20" height="20" viewBox="0 0 20 20"><circle cx="10" cy="10" r="8.6" fill="none" stroke="#3a3a3a" stroke-width="1.4"/><circle cx="10" cy="8" r="3.3" fill="none" stroke="#3a3a3a" stroke-width="1.4"/><path d="M4 15.8 C5.5 12.4 14.5 12.4 16 15.8" fill="none" stroke="#3a3a3a" stroke-width="1.4"/></svg>
<svg class="abs" style="left:1770.0px;top:8.0px" width="20" height="20" viewBox="0 0 20 20"><circle cx="10" cy="10" r="8.6" fill="none" stroke="#3a3a3a" stroke-width="1.4"/></svg>
<div class="t " style="left:1776.2px;top:11.1px;font-size:14px;color:#2a2a2a;font-weight:bold;">?</div>
<div class="abs" style="left:1812px;top:22px;width:10px;height:2px;background:#2a2a2a"></div>
<svg class="abs" style="left:1845.5px;top:11.0px" width="16" height="14" viewBox="0 0 16 14"><rect x="0.8" y="0.8" width="14.4" height="12.4" fill="none" stroke="#2a2a2a" stroke-width="1.5"/><path d="M8 0.8 V13.2" stroke="#2a2a2a" stroke-width="1.2"/><path d="M2.4 7 H6.6 M9.4 7 H13.6 M4.4 5 L2.4 7 L4.4 9 M11.6 5 L13.6 7 L11.6 9" stroke="#2a2a2a" stroke-width="1" fill="none"/></svg>
<svg class="abs" style="left:1882.0px;top:11.0px" width="16" height="14" viewBox="0 0 16 14"><path d="M4.5 4 V1 H15 V9 H11.5" fill="none" stroke="#2a2a2a" stroke-width="1.5"/><rect x="1" y="4.6" width="10.4" height="8.4" fill="none" stroke="#2a2a2a" stroke-width="1.5"/></svg>
<svg class="abs" style="left:1919.5px;top:12.0px" width="12" height="12" viewBox="0 0 12 12"><path d="M1 1 L11 11 M11 1 L1 11" stroke="#2a2a2a" stroke-width="1.7"/></svg>
<svg class="abs" style="left:25.5px;top:41.0px" width="22" height="20" viewBox="0 0 22 20"><path d="M9.300 3 L15.500 1 L20.100 3.500 V17 L14.500 19.300 L10 17 Z" fill="#ededed" stroke="#c3c3c3" stroke-width="1.100" stroke-linejoin="round"/><path d="M14.500 5.500 V19.300 M14.500 5.500 L20.100 3.500 M14.500 5.500 L9.300 3" fill="none" stroke="#c3c3c3" stroke-width="0.900"/><path d="M1.900 9 L6.500 6.700 L13.100 8.500 V15 L7.500 17.500 L1.900 15Z" fill="#d4d4d4" stroke="#c3c3c3" stroke-width="1" stroke-linejoin="round"/><path d="M1.900 9 L7.500 10.800 L13.100 8.500 M7.500 10.800 V17.500" fill="none" stroke="#c3c3c3" stroke-width="0.900"/></svg>
<div class="t " style="left:13.8px;top:63.7px;font-size:11.5px;color:#b6b6b6;letter-spacing:-0.075px;">Extruded</div><div class="t " style="left:11.5px;top:76.7px;font-size:11.5px;color:#b6b6b6;letter-spacing:-0.621px;">Boss/Base</div>
<svg class="abs" style="left:86.0px;top:39.0px" width="22" height="22" viewBox="0 0 22 22"><path d="M6 3 C13 0.5 20 5 19 12 C18 18 10 21 4 18 C2 16.5 2.5 13 5 12.5 C9 14.5 12.5 13.5 13 10 C13 7 10 6 7.5 7.5 C5 7 4.5 4 6 3Z" fill="#e8e8e8" stroke="#c3c3c3" stroke-width="1.1" stroke-linejoin="round"/><path d="M7.5 7.5 C9 4.5 13 4 15 6 M5 12.500 C6 10 10 9.500 13 10" fill="none" stroke="#c3c3c3" stroke-width="1"/></svg>
<div class="t " style="left:74.2px;top:63.7px;font-size:11.5px;color:#b6b6b6;letter-spacing:-0.349px;">Revolved</div><div class="t " style="left:72.0px;top:76.7px;font-size:11.5px;color:#b6b6b6;letter-spacing:-0.621px;">Boss/Base</div>
<svg class="abs" style="left:128.0px;top:39.5px" width="22" height="20" viewBox="0 0 22 20"><path d="M2 13 C2 18.5 9 18.500 10 13 L11 6.500 C11.5 4 14 4.500 14.5 6 C17 8 20.500 6 20 3.500 C19 0.500 13.500 0 10 2 C7 3.500 6.500 8 6 12 C5.500 14 2.500 11.500 2 13Z" fill="#e8e8e8" stroke="#c3c3c3" stroke-width="1.1" stroke-linejoin="round"/></svg>
<div class="t " style="left:155.8px;top:44.3px;font-size:11.5px;color:#b6b6b6;letter-spacing:-0.331px;">Swept Boss/Base</div>
<svg class="abs" style="left:131.0px;top:66.0px" width="18" height="20" viewBox="0 0 18 20"><path d="M6.5 2.500 C6.500 1 11.500 1 11.500 2.500 L12.500 10 L16 15 L9 19 L2 15 L5.500 10Z" fill="#cfcfcf" stroke="#c3c3c3" stroke-width="1"/></svg>
<div class="t " style="left:155.8px;top:70.3px;font-size:11.5px;color:#b6b6b6;letter-spacing:-0.236px;">Lofted Boss/Base</div>
<svg class="abs" style="left:128.5px;top:93.5px" width="22" height="18" viewBox="0 0 22 18"><path d="M1.500 9 L8 4.500 L11 6 L15 2 L20.500 5 V12 L12 16.500 L6 17 L1.500 14Z" fill="#e8e8e8" stroke="#c3c3c3" stroke-width="1.1" stroke-linejoin="round"/><path d="M1.500 9 L6.500 11.500 L12 9 L20.500 5 M6.500 11.500 V17" fill="none" stroke="#c3c3c3" stroke-width="1"/></svg>
<div class="t " style="left:155.8px;top:96.8px;font-size:11.5px;color:#b6b6b6;letter-spacing:-0.288px;">Boundary Boss/Base</div>
<div class="sep" style="left:270.5px;top:37px;height:78px"></div>
<svg class="abs" style="left:290.0px;top:41.0px" width="20" height="20" viewBox="0 0 20 20"><path d="M3 4 L14 2 L17 3.500 V16 L6 18.500 L3 17Z" fill="#e8e8e8" stroke="#c3c3c3" stroke-width="1.1" stroke-linejoin="round"/><path d="M6 5.500 L17 3.500 M6 5.500 V18.500 M3 4 L6 5.500" fill="none" stroke="#c3c3c3" stroke-width="1"/><rect x="9" y="7.500" width="5" height="6.500" fill="#f2f2f2" stroke="#c3c3c3" stroke-width="1"/></svg>
<div class="t " style="left:277.4px;top:63.7px;font-size:11.5px;color:#b6b6b6;letter-spacing:-0.018px;">Extruded</div><div class="t " style="left:291.8px;top:76.7px;font-size:11.5px;color:#b6b6b6;letter-spacing:-0.298px;">Cut</div>
<svg class="abs" style="left:340.0px;top:40.0px" width="22" height="22" viewBox="0 0 22 22"><path d="M3 8 L10 4.500 L17 8 V16 L10 19.500 L3 16Z" fill="#e8e8e8" stroke="#c3c3c3" stroke-width="1.1" stroke-linejoin="round"/><circle cx="10" cy="12" r="3.400" fill="#f2f2f2" stroke="#c3c3c3" stroke-width="1"/><path d="M13 8.500 L19 2.500" stroke="#c3c3c3" stroke-width="2"/><path d="M15 1.500 L16 3 M19.500 6 L21 6.500 M19 1 V2.500" stroke="#c3c3c3" stroke-width="0.9"/></svg>
<div class="t " style="left:340.1px;top:63.7px;font-size:11.5px;color:#b6b6b6;letter-spacing:0.050px;">Hole</div><div class="t " style="left:334.3px;top:76.7px;font-size:11.5px;color:#b6b6b6;letter-spacing:-0.076px;">Wizard</div>
<svg class="abs" style="left:347.2px;top:102.9px" width="8" height="5" viewBox="0 0 8 5"><path d="M0.8 0.5 H7.2 L4 3.7Z" fill="#9a9a9a"/></svg>
<svg class="abs" style="left:392.0px;top:40.0px" width="22" height="22" viewBox="0 0 22 22"><path d="M2.500 6 C2.500 2 19.500 2 19.500 6 V16 C17 18.500 14 19.500 14 19.500 L11 13 L8 19.500 C6 19 3.500 18 2.500 16Z" fill="#e8e8e8" stroke="#c3c3c3" stroke-width="1.1" stroke-linejoin="round"/><path d="M2.500 6 C4 8.500 8 9 8 9 V19.500 M19.500 6 C18 8.500 14 9 14 9 V19.500 M8 9 L11 6 L14 9" fill="none" stroke="#c3c3c3" stroke-width="1"/></svg>
<div class="t " style="left:380.4px;top:63.7px;font-size:11.5px;color:#b6b6b6;letter-spacing:-0.249px;">Revolved</div><div class="t " style="left:394.9px;top:76.7px;font-size:11.5px;color:#b6b6b6;letter-spacing:-0.298px;">Cut</div>
<svg class="abs" style="left:433.5px;top:39.5px" width="20" height="20" viewBox="0 0 20 20"><path d="M2 4 L12 1.500 L16 3 V8 C12 8 9 10 9 15 L5 18 L2 16.500Z" fill="#e8e8e8" stroke="#c3c3c3" stroke-width="1.1" stroke-linejoin="round"/><path d="M5 5.500 L16 3 M5 5.500 V18 M2 4 L5 5.500" fill="none" stroke="#c3c3c3" stroke-width="1"/><circle cx="16.500" cy="11.500" r="2" fill="#f2f2f2" stroke="#c3c3c3" stroke-width="1"/></svg>
<div class="t " style="left:460.5px;top:44.3px;font-size:11.5px;color:#b6b6b6;letter-spacing:0.044px;">Swept Cut</div>
<svg class="abs" style="left:433.5px;top:66.0px" width="20" height="20" viewBox="0 0 20 20"><path d="M2.500 5 L10 2 L17.500 5 V15 L13 17 V8 L10 6.500 L7 8 V18.500 L2.500 16Z" fill="#e8e8e8" stroke="#c3c3c3" stroke-width="1.1" stroke-linejoin="round"/><path d="M7 8 L2.500 5 M13 8 L17.500 5" fill="none" stroke="#c3c3c3" stroke-width="1"/></svg>
<div class="t " style="left:460.5px;top:70.3px;font-size:11.5px;color:#b6b6b6;letter-spacing:0.116px;">Lofted Cut</div>
<svg class="abs" style="left:433.0px;top:93.5px" width="22" height="18" viewBox="0 0 22 18"><path d="M1.500 9 L8 5 C10 8 13 7 14 2 L20.500 5 V12 L8 17.500 L1.500 14Z" fill="#e8e8e8" stroke="#c3c3c3" stroke-width="1.1" stroke-linejoin="round"/><path d="M1.500 9 L8 12 L20.500 5 M8 12 V17.500" fill="none" stroke="#c3c3c3" stroke-width="1"/></svg>
<div class="t " style="left:460.5px;top:96.8px;font-size:11.5px;color:#b6b6b6;letter-spacing:0.008px;">Boundary Cut</div>
<div class="sep" style="left:542px;top:37px;height:78px"></div>
<svg class="abs" style="left:550.0px;top:40.5px" width="22" height="20" viewBox="0 0 22 20"><path d="M2 8 L9 3 C13 1 18 2 20 5 V14 L12 18.500 L2 15Z" fill="#e8e8e8" stroke="#c3c3c3" stroke-width="1.1" stroke-linejoin="round"/><path d="M2 8 L12 11 C13 7 17 5 20 5 M12 11 V18.500" fill="none" stroke="#c3c3c3" stroke-width="1"/></svg>
<div class="t " style="left:549.4px;top:63.7px;font-size:11.5px;color:#b6b6b6;letter-spacing:0.104px;">Fillet</div>
<svg class="abs" style="left:557.5px;top:102.9px" width="8" height="5" viewBox="0 0 8 5"><path d="M0.8 0.5 H7.2 L4 3.7Z" fill="#9a9a9a"/></svg>
<svg class="abs" style="left:593.5px;top:41.0px" width="19" height="19" viewBox="0 0 19 19"><g fill="#f1f1f1" stroke="#c3c3c3" stroke-width="1.1" stroke-linejoin="round"><path d="M1.500 1 H6 V2.500 L9 4.500 L6 6.500 V8 H1.500Z"/><path d="M10.500 1 H15 V2.500 L18 4.500 L15 6.500 V8 H10.500Z"/><path d="M1.500 11 H6 V12.500 L9 14.500 L6 16.500 V18 H1.500Z"/><path d="M10.500 11 H15 V12.500 L18 14.500 L15 16.500 V18 H10.500Z"/></g></svg>
<div class="t " style="left:587.6px;top:63.7px;font-size:11.5px;color:#b6b6b6;letter-spacing:-0.193px;">Linear</div><div class="t " style="left:584.7px;top:76.7px;font-size:11.5px;color:#b6b6b6;letter-spacing:-0.046px;">Pattern</div>
<svg class="abs" style="left:598.8px;top:102.9px" width="8" height="5" viewBox="0 0 8 5"><path d="M0.8 0.5 H7.2 L4 3.7Z" fill="#9a9a9a"/></svg>
<svg class="abs" style="left:628.5px;top:39.5px" width="20" height="20" viewBox="0 0 20 20"><path d="M3 15 L12 2 L16 3.500 V12 L8 18.500 L3 17Z" fill="#e8e8e8" stroke="#c3c3c3" stroke-width="1.1" stroke-linejoin="round"/><path d="M6 14.500 C9 12 12 8 12.500 5 M12 2 L12.500 5 L16 3.500" fill="none" stroke="#c3c3c3" stroke-width="1"/></svg>
<div class="t " style="left:655.4px;top:44.3px;font-size:11.5px;color:#b6b6b6;letter-spacing:-0.528px;">Rib</div>
<svg class="abs" style="left:628.5px;top:67.0px" width="20" height="18" viewBox="0 0 20 18"><path d="M1.500 4 L11 1.500 L18.500 7 V15 L11 17 L1.500 12Z" fill="#d4d4d4" stroke="#c3c3c3" stroke-width="1" stroke-linejoin="round"/><path d="M11 9 H18.500 M11 9 V17 M1.500 4 L11 9" fill="none" stroke="#c3c3c3" stroke-width="1"/><path d="M11 9 H18.500 V15 L11 17Z" fill="#f0f0f0" stroke="#c3c3c3" stroke-width="1"/></svg>
<div class="t " style="left:655.4px;top:70.3px;font-size:11.5px;color:#b6b6b6;letter-spacing:0.195px;">Draft</div>
<svg class="abs" style="left:628.5px;top:92.5px" width="20" height="20" viewBox="0 0 20 20"><path d="M2 4 L12 2 L18 4.500 V16 L8 18.500 L2 15.500Z" fill="#e8e8e8" stroke="#c3c3c3" stroke-width="1.1" stroke-linejoin="round"/><path d="M5.500 6.500 L15 5 V14 L7.500 16 L5.500 14.500Z" fill="#f4f4f4" stroke="#c3c3c3" stroke-width="1"/><path d="M8 7 V16" stroke="#c3c3c3" stroke-width="1"/></svg>
<div class="t " style="left:655.4px;top:96.8px;font-size:11.5px;color:#b6b6b6;letter-spacing:-0.243px;">Shell</div>
<svg class="abs" style="left:693.5px;top:39.5px" width="20" height="20" viewBox="0 0 20 20"><path d="M1.500 4.500 C1.500 1 18.500 1 18.500 4.500 V15.500 C18.500 19 1.500 19 1.500 15.500Z" fill="#e8e8e8" stroke="#c3c3c3" stroke-width="1.1" stroke-linejoin="round"/><path d="M1.500 4.500 C1.500 8 18.500 8 18.500 4.500" fill="none" stroke="#c3c3c3" stroke-width="1"/><path d="M4.500 10 H8.500 V14.500 H4.500Z M11 10 H14 C16 10 16 14.500 14 14.500 H11Z" fill="none" stroke="#c3c3c3" stroke-width="1.300"/></svg>
<div class="t " style="left:720.4px;top:44.3px;font-size:11.5px;color:#b6b6b6;letter-spacing:0.045px;">Wrap</div>
<svg class="abs" style="left:693.5px;top:66.0px" width="20" height="20" viewBox="0 0 20 20"><path d="M2 9 L8 7 V14 L6 15.500 L2 18.500Z" fill="#e8e8e8" stroke="#c3c3c3" stroke-width="1.1" stroke-linejoin="round"/><path d="M7 5 L12 2 L17 5 V11 L12 14 L7 11Z" fill="#f1f1f1" stroke="#c3c3c3" stroke-width="1"/><path d="M7 5 L12 7.500 L17 5 M12 7.500 V14" fill="none" stroke="#c3c3c3" stroke-width="0.9"/><path d="M17 8 L19 9 V14 L8 14" fill="none" stroke="#c3c3c3" stroke-width="1"/></svg>
<div class="t " style="left:720.4px;top:70.3px;font-size:11.5px;color:#b6b6b6;letter-spacing:-0.062px;">Intersect</div>
<svg class="abs" style="left:692.5px;top:92.5px" width="22" height="20" viewBox="0 0 22 20"><path d="M11 1 V19" stroke="#c3c3c3" stroke-width="1.200"/><path d="M1.500 3.500 H4.800 V8 H8.500 V12 H4.800 V16.500 H1.500Z" fill="#dcdcdc" stroke="#c3c3c3" stroke-width="1"/><path d="M20.500 3.500 H17.200 V8 H13.500 V12 H17.200 V16.500 H20.500Z" fill="#f3f3f3" stroke="#c3c3c3" stroke-width="1"/></svg>
<div class="t " style="left:720.4px;top:96.8px;font-size:11.5px;color:#b6b6b6;letter-spacing:0.277px;">Mirror</div>
<div class="sep" style="left:775.5px;top:37px;height:78px"></div>
<svg class="abs" style="left:797.0px;top:39.5px" width="22" height="22" viewBox="0 0 22 22"><circle cx="3.500" cy="4" r="2.300" fill="#e0e0e0" stroke="#c3c3c3" stroke-width="1"/><path d="M8 8 L19 3 V16 L8 21Z" fill="#e8e8e8" stroke="#c3c3c3" stroke-width="1.1" stroke-linejoin="round"/><path d="M11.500 6.500 V19.500 M15 5 V18" stroke="#c3c3c3" stroke-width="0.8" stroke-dasharray="2 1.500"/></svg>
<div class="t " style="left:783.0px;top:63.7px;font-size:11.5px;color:#b6b6b6;letter-spacing:-0.319px;">Reference</div><div class="t " style="left:783.7px;top:76.7px;font-size:11.5px;color:#b6b6b6;letter-spacing:-0.212px;">Geometry</div>
<svg class="abs" style="left:804.2px;top:102.9px" width="8" height="5" viewBox="0 0 8 5"><path d="M0.8 0.5 H7.2 L4 3.7Z" fill="#9a9a9a"/></svg>
<svg class="abs" style="left:851.0px;top:39.5px" width="20" height="22" viewBox="0 0 20 22"><path d="M2.500 3 C8 2 6 10 4.500 14 C3 19 11 20 13 15 C15 10 11 4 18 2.500" fill="none" stroke="#c4c4c4" stroke-width="1.600" stroke-linecap="round"/></svg>
<div class="t " style="left:844.8px;top:63.7px;font-size:11.5px;color:#b6b6b6;letter-spacing:-0.645px;">Curves</div>
<svg class="abs" style="left:856.6px;top:102.9px" width="8" height="5" viewBox="0 0 8 5"><path d="M0.8 0.5 H7.2 L4 3.7Z" fill="#9a9a9a"/></svg>
<div class="sep" style="left:885px;top:37px;height:78px"></div>
<svg class="abs" style="left:905px;top:40px" width="24" height="22" viewBox="0 0 24 22"><path d="M5.800 2.700 L20.900 10.400 L20.500 14.800 L6.400 7.400Z" fill="#f4d433"/><path d="M5.800 2.700 L20.900 10.400 L20.500 14.800" fill="none" stroke="#3a3310" stroke-width="1.100"/><path d="M8.800 4.400 L8.600 6.600 M11.800 5.900 L11.600 8.100 M14.800 7.400 L14.600 9.600 M17.800 8.900 L17.600 11.100" stroke="#3a3310" stroke-width="1"/><path d="M3.100 10.400 L16.500 17.500" stroke="#2c6f96" stroke-width="1.700"/><path d="M20.400 19.900 L12.800 19.300 L16.800 13.800Z" fill="#2c6f96"/></svg>
<div class="t " style="left:892.0px;top:63.7px;font-size:11.5px;color:#1b1b28;letter-spacing:0.098px;">Instant3D</div>
<div class="sep" style="left:948.5px;top:37px;height:78px"></div>
<svg class="abs" style="left:967.0px;top:40.0px" width="22" height="22" viewBox="0 0 22 22"><path d="M2.500 6 C2.500 2 19.500 2 19.500 6 V16 C17 18.500 14 19.500 14 19.500 L11 13 L8 19.500 C6 19 3.500 18 2.500 16Z" fill="#e8e8e8" stroke="#c3c3c3" stroke-width="1.1" stroke-linejoin="round"/><path d="M2.500 6 C4 8.500 8 9 8 9 V19.500 M19.500 6 C18 8.500 14 9 14 9 V19.500 M8 9 L11 6 L14 9" fill="none" stroke="#c3c3c3" stroke-width="1"/></svg>
<div class="t " style="left:955.9px;top:63.7px;font-size:11.5px;color:#b6b6b6;letter-spacing:-0.363px;">Revolved</div><div class="t " style="left:970.1px;top:76.7px;font-size:11.5px;color:#b6b6b6;letter-spacing:-0.448px;">Cut</div>
<svg class="abs" style="left:1920.5px;top:100.0px" width="12" height="8" viewBox="0 0 12 8"><path d="M1.500 6.500 L6 2 L10.500 6.500" fill="none" stroke="#222" stroke-width="1.800"/></svg>
<div id="left"></div>
<div class="abs" style="left:64px;top:118px;width:118px;height:22px;background:#d2d2d2;border:1px solid #a9a9a9;border-bottom:none;border-top:none"></div>
<div class="abs" style="left:120.5px;top:118px;width:1px;height:22px;background:#a9a9a9"></div>
<div class="abs" style="left:0;top:116px;width:64px;height:4px;background:#f5f5f5"></div>
<div class="t " style="left:8.6px;top:123.1px;font-size:12.5px;color:#1e1e1e;letter-spacing:-0.161px;-webkit-text-stroke:0.35px #1e1e1e;">Features</div>
<div class="t " style="left:75.2px;top:123.1px;font-size:12.5px;color:#1e1e1e;letter-spacing:-0.643px;">Sketch</div>
<div class="t " style="left:130.0px;top:123.1px;font-size:12.5px;color:#1e1e1e;letter-spacing:-0.620px;">Evaluate</div>
<div class="abs" style="left:0px;top:140px;width:242px;height:2px;background:#a9b1b1"></div>
<div class="abs" style="left:0px;top:144.5px;width:242px;height:1px;background:#cdd3d3"></div>
<div class="abs" style="left:0px;top:160px;width:242px;height:1px;background:#d2d2d2"></div>
<svg class="abs" style="left:118.0px;top:150.0px" width="7" height="7" viewBox="0 0 7 7"><circle cx="3.500" cy="3.500" r="2.400" fill="#f5f5f5" stroke="#a8a8a8" stroke-width="1"/></svg>
<div class="abs" style="left:2px;top:165px;width:40px;height:25.500px;background:#d2d2d2;border:1px solid #b0b0b0;border-top-color:#bdbdbd"></div>
<div class="abs" style="left:42px;top:165px;width:40.5px;height:26px;background:#f5f5f5"></div>
<div class="abs" style="left:82.5px;top:165px;width:40px;height:25.500px;background:#d2d2d2;border:1px solid #b0b0b0;border-top-color:#bdbdbd"></div>
<div class="abs" style="left:122.5px;top:165px;width:41px;height:25.500px;background:#d2d2d2;border:1px solid #b0b0b0;border-top-color:#bdbdbd"></div>
<div class="abs" style="left:163.5px;top:165px;width:40.5px;height:25.500px;background:#d2d2d2;border:1px solid #b0b0b0;border-top-color:#bdbdbd"></div>
<div class="abs" style="left:0px;top:190px;width:42px;height:1px;background:#b0b0b0"></div>
<div class="abs" style="left:82.5px;top:190px;width:160.5px;height:1px;background:#b0b0b0"></div>
<svg class="abs" style="left:12.6px;top:167.3px" width="20" height="20" viewBox="0 0 20 20"><g stroke="#8a6a08" stroke-width="0.9" stroke-linejoin="round"><path d="M1.7 5.9 L6 8.2 L6 10.8 L11.8 13.4 L11.8 18.8 L1.7 11.4Z" fill="#efc526"/><path d="M11.8 13.4 L18 9 L18 14.2 L11.8 18.8Z" fill="#d9a90f"/><path d="M6 10.8 L13.6 7 L18 9 L11.8 13.4Z" fill="#f9e06a"/><path d="M6 8.2 L13.6 3.2 L13.6 7 L6 10.8Z" fill="#d9a90f"/><path d="M9.4 1 L1.7 5.9 L6 8.2 L13.6 3.2Z" fill="#f9e06a"/></g></svg>
<svg class="abs" style="left:52.0px;top:168.5px" width="20" height="19" viewBox="0 0 20 19"><rect x="1" y="1" width="18" height="17" rx="1" fill="#fff" stroke="#1f5f86" stroke-width="1.300"/><rect x="1" y="1" width="18" height="3.500" fill="#3d8dbb" stroke="#1f5f86" stroke-width="1"/><g fill="#3d8dbb" stroke="#1f5f86" stroke-width="0.800"><rect x="3.500" y="6.500" width="3.500" height="2.400"/><rect x="3.500" y="10.300" width="3.500" height="2.400"/><rect x="3.500" y="14.100" width="3.500" height="2.400"/></g><path d="M8.500 7.700 H16.500 M8.500 11.500 H16.500 M8.500 15.300 H16.500" stroke="#222" stroke-width="1.200"/></svg>
<svg class="abs" style="left:94.0px;top:168.5px" width="18" height="20" viewBox="0 0 18 20"><path d="M3 1.500 V18.500 M3 5 H8 M3 14.500 H9.500 M1 1.500 H5" fill="none" stroke="#222" stroke-width="1.300"/><rect x="8" y="2" width="5" height="5" fill="#fff" stroke="#222" stroke-width="1.200"/><rect x="6" y="8.500" width="4" height="3.500" fill="#fff" stroke="#222" stroke-width="1.100"/><rect x="10" y="12" width="5" height="5" fill="#fff" stroke="#222" stroke-width="1.200"/></svg>
<svg class="abs" style="left:133.0px;top:167.5px" width="20" height="20" viewBox="0 0 20 20"><circle cx="10" cy="10" r="6" fill="none" stroke="#111" stroke-width="1.800"/><path d="M10 1 V19 M1 10 H19" stroke="#111" stroke-width="1.800"/></svg>
<svg class="abs" style="left:174.5px;top:168.0px" width="20" height="20" viewBox="0 0 20 20"><defs><clipPath id="bc"><circle cx="10" cy="10" r="8.800"/></clipPath></defs><g clip-path="url(#bc)"><rect width="20" height="20" fill="#e6352b"/><path d="M0 0 H10 V10 H0Z" fill="#3a6fd8"/><path d="M0 10 H10 V20 H0Z" fill="#47b04b"/><path d="M10 10 L20 13 V20 H8Z" fill="#f4c020"/><path d="M10 10 L20 6 V14Z" fill="#e6352b"/><ellipse cx="14" cy="6" rx="3.200" ry="5.500" transform="rotate(-35 14 6)" fill="#1a1a1a"/></g><circle cx="10" cy="10" r="8.800" fill="none" stroke="#7d7d7d" stroke-width="0.600"/></svg>
<svg class="abs" style="left:8.5px;top:197.0px" width="21" height="20" viewBox="0 0 21 20"><g fill="#fff" stroke="#222" stroke-width="1.100" stroke-linejoin="miter"><path d="M7 0.800 H14 V4 H12 V6.300 H9 V4 H7Z"/><path d="M7 19.200 H14 V16 H12 V13.700 H9 V16 H7Z"/><path d="M20.200 6.500 V13.500 H17.800 L15.500 11.600 H14.200 V8.400 H15.500 L17.800 6.500Z"/></g><path d="M0.800 6.500 H3.600 L6 8.400 H7.200 V11.600 H6 L3.600 13.500 H0.800Z" fill="#3d8dbb" stroke="#1a4f72" stroke-width="1.100"/></svg>
<div class="t " style="left:34.2px;top:202.0px;font-size:12.5px;color:#1c1c1c;letter-spacing:-0.288px;font-weight:bold;">CirPattern2</div>
<svg class="abs" style="left:215.8px;top:199.8px" width="15" height="15" viewBox="0 0 15 15"><circle cx="7.500" cy="7.500" r="6.600" fill="#fff" stroke="#2a3f5a" stroke-width="1.200"/></svg>
<div class="t " style="left:220.4px;top:202.0px;font-size:11px;color:#2a5a8a;font-weight:bold;">?</div>
<svg class="abs" style="left:7.5px;top:228.0px" width="16" height="13" viewBox="0 0 16 13"><path d="M1.500 7 L5.500 11 L14.500 1.800" fill="none" stroke="#2e9b2e" stroke-width="2.400"/></svg>
<svg class="abs" style="left:37.0px;top:229.0px" width="12" height="12" viewBox="0 0 12 12"><path d="M1.200 1.200 L10.800 10.800 M10.800 1.200 L1.200 10.800" stroke="#d42a1c" stroke-width="2"/></svg>
<div class="abs" style="left:5px;top:256px;width:232px;height:1px;background:#c6c6c6"></div>
<div class="t " style="left:9.3px;top:265.0px;font-size:12px;color:#444;letter-spacing:-0.165px;-webkit-text-stroke:0.4px #3a3a3a;">Direction 1</div>
<svg class="abs" style="left:223.3px;top:266.5px" width="12" height="8" viewBox="0 0 12 8"><path d="M1 6.5 L6 1.5 L11 6.5" fill="none" stroke="#484848" stroke-width="1.900"/></svg>
<div class="abs" style="left:9px;top:284px;width:24px;height:24px;background:#fff;border:1px solid #9a9a9a"></div>
<svg class="abs" style="left:12.0px;top:287.0px" width="18" height="18" viewBox="0 0 18 18"><path d="M2.800 9 A6.200 6.200 0 0 1 14.600 6.300" fill="none" stroke="#2f7fb5" stroke-width="1.700"/><path d="M16.800 4.200 L16 10 L10.800 7.600Z" fill="#2f7fb5"/><path d="M15.200 9.500 A6.200 6.200 0 0 1 3.600 12.200" fill="none" stroke="#c4c4c4" stroke-width="1.700"/><path d="M1.200 14 L2 8.600 L7 10.800Z" fill="#c4c4c4"/></svg>
<div class="abs" style="left:36.500px;top:284px;width:193px;height:26px;background:#c3e1fb;border:1px solid #6db0ea"></div>
<div class="abs" style="left:39px;top:286.500px;width:188px;height:17px;background:#0b6fd3"></div>
<div class="t " style="left:41.3px;top:288.9px;font-size:11.5px;color:#fff;letter-spacing:-0.197px;">Line1@Sketch1</div>
<svg class="abs" style="left:38.0px;top:319.0px" width="14" height="14" viewBox="0 0 14 14"><circle cx="7" cy="7" r="6" fill="#fff" stroke="#333" stroke-width="1"/></svg>
<div class="t " style="left:55.0px;top:320.6px;font-size:11.5px;color:#1a1a1a;letter-spacing:-0.000px;">Instance spacing</div>
<div class="abs" style="left:0;top:331.700px;width:245px;height:106.500px;border:8.500px solid #ff9933;border-left-width:8px;border-right-width:9px;background:#f5f5f5"></div>
<svg class="abs" style="left:38.0px;top:341.7px" width="14" height="14" viewBox="0 0 14 14"><circle cx="7" cy="7" r="6" fill="#fff" stroke="#333" stroke-width="1"/><circle cx="7" cy="7" r="3.300" fill="#222"/></svg>
<div class="t " style="left:55.0px;top:343.3px;font-size:11.5px;color:#1a1a1a;letter-spacing:0.005px;">Equal spacing</div>
<svg class="abs" style="left:11.5px;top:369.5px" width="19" height="19" viewBox="0 0 19 19"><path d="M2 1 V17.500 H18" fill="none" stroke="#1f5f86" stroke-width="1.600"/><path d="M5 6.500 C10 6.500 13.500 9.500 14 14.500" fill="none" stroke="#222" stroke-width="1.500"/><path d="M2.800 6.500 L7 3.500 V9.500Z M14 17 L11 12.800 H17Z" fill="#222"/></svg>
<div class="t " style="left:25.5px;top:371.1px;font-size:7px;color:#222;font-weight:bold;">A</div>
<div class="inp" style="left:36.500px;top:369px;width:190.500px;height:20.500px"></div>
<div class="t " style="left:39.0px;top:373.7px;font-size:11.5px;color:#1a1a1a;letter-spacing:-0.207px;">360.00deg</div>
<svg class="abs" style="left:208.5px;top:371.0px" width="15" height="17" viewBox="0 0 15 17"><rect x="0.500" y="0.500" width="14" height="16" fill="#f3f3f3" stroke="#adadad"/><path d="M0.500 8.5 H14.5" stroke="#adadad"/><path d="M4.5 6 L7.5 2.800 L10.5 6Z M4.5 11 L7.5 14.2 L10.5 11Z" fill="#222"/></svg>
<svg class="abs" style="left:11.0px;top:402.5px" width="20" height="19" viewBox="0 0 20 19"><g fill="#2f7fb5"><circle cx="10" cy="2" r="1.500"/><circle cx="10" cy="17" r="1.500"/><circle cx="2.500" cy="9.500" r="1.500"/><circle cx="17.500" cy="9.500" r="1.500"/><circle cx="4.700" cy="4.200" r="1.500"/><circle cx="15.300" cy="4.200" r="1.500"/><circle cx="4.700" cy="14.800" r="1.500"/><circle cx="15.300" cy="14.800" r="1.500"/></g><text x="6.300" y="13.500" font-family="Liberation Sans,sans-serif" font-size="11" font-weight="bold" fill="#222">#</text></svg>
<div class="inp" style="left:36.500px;top:401.300px;width:190.500px;height:20.700px"></div>
<div class="t " style="left:39.0px;top:406.1px;font-size:11.5px;color:#1a1a1a;">6</div>
<svg class="abs" style="left:208.5px;top:403.5px" width="15" height="17" viewBox="0 0 15 17"><rect x="0.500" y="0.500" width="14" height="16" fill="#f3f3f3" stroke="#adadad"/><path d="M0.500 8.5 H14.5" stroke="#adadad"/><path d="M4.5 6 L7.5 2.800 L10.5 6Z M4.5 11 L7.5 14.2 L10.5 11Z" fill="#222"/></svg>
<svg class="abs" style="left:9.0px;top:442.5px" width="12" height="12" viewBox="0 0 12 12"><rect x="0.500" y="0.500" width="11" height="11" fill="#fff" stroke="#333" stroke-width="1"/></svg>
<div class="t " style="left:26.7px;top:442.8px;font-size:12px;color:#333;letter-spacing:-0.175px;-webkit-text-stroke:0.4px #3a3a3a;">Direction 2</div>
<svg class="abs" style="left:223.3px;top:444.0px" width="12" height="8" viewBox="0 0 12 8"><path d="M1 1.5 L6 6.5 L11 1.500" fill="none" stroke="#484848" stroke-width="1.900"/></svg>
<div class="abs" style="left:5px;top:466.8px;width:232px;height:1px;background:#c6c6c6"></div>
<svg class="abs" style="left:8.8px;top:475.0px" width="12" height="12" viewBox="0 0 12 12"><rect x="0.500" y="0.500" width="11" height="11" fill="#fff" stroke="#333" stroke-width="1"/><path d="M2.500 6.0 L5.0 9.0 L9.8 2.500" fill="none" stroke="#222" stroke-width="1.300"/></svg>
<div class="t " style="left:24.8px;top:475.1px;font-size:12px;color:#333;letter-spacing:-0.501px;-webkit-text-stroke:0.4px #3a3a3a;">Features and Faces</div>
<svg class="abs" style="left:223.3px;top:476.5px" width="12" height="8" viewBox="0 0 12 8"><path d="M1 6.5 L6 1.5 L11 6.5" fill="none" stroke="#484848" stroke-width="1.900"/></svg>
<svg class="abs" style="left:11.8px;top:497.0px" width="18" height="18" viewBox="0 0 18 18"><path d="M1.500 5.500 C1.500 2 9 1 11 3.500 L8.500 5.500 C7.500 4.500 5 5 5 7 V12.500 L1.500 14.500Z" fill="#fff" stroke="#222" stroke-width="1"/><path d="M6.500 8 L11.500 5.500 L16.500 8 V14 L11.500 16.800 L6.500 14Z" fill="#7cc0e8" stroke="#123f5c" stroke-width="1" stroke-linejoin="round"/><path d="M6.500 8 L11.500 10.500 L16.500 8 M11.500 10.500 V16.800" fill="none" stroke="#123f5c" stroke-width="0.900"/><path d="M11.500 10.500 L16.500 8 V14 L11.500 16.800Z" fill="#2f7fb5"/></svg>
<div class="inp" style="left:38px;top:494px;width:189px;height:33.500px"></div>
<svg class="abs" style="left:128.5px;top:526.5px" width="8" height="4" viewBox="0 0 8 4"><path d="M0.500 3.500 L4 0.800 L7.500 3.500" fill="#f5f5f5" stroke="#9a9a9a" stroke-width="0.800"/></svg>
<div class="abs" style="left:0;top:530.200px;width:245px;height:76.400px;border:8.300px solid #ff9933;border-left-width:7.800px;border-right-width:9px;border-bottom-width:8.400px;background:#f5f5f5"></div>
<svg class="abs" style="left:11.8px;top:548.0px" width="18" height="19" viewBox="0 0 18 19"><path d="M2 5 L9 1.500 L16 5 V13.500 L9 17.500 L2 13.500Z" fill="#fff" stroke="#222" stroke-width="1.100" stroke-linejoin="round"/><path d="M2 5 L9 8.500 L16 5" fill="none" stroke="#222" stroke-width="1"/><path d="M9 8.500 L16 5 V13.500 L9 17.500Z" fill="#5aaedd" stroke="#123f5c" stroke-width="1" stroke-linejoin="round"/></svg>
<div class="inp" style="left:38px;top:545px;width:189px;height:49.500px"></div>
<div class="t " style="left:44.0px;top:549.3px;font-size:11.5px;color:#1a1a1a;letter-spacing:-0.399px;">Face&lt;1&gt;</div>
<svg class="abs" style="left:128.5px;top:594.3px" width="8" height="4" viewBox="0 0 8 4"><path d="M0.500 3.500 L4 0.800 L7.500 3.500" fill="#f5f5f5" stroke="#9a9a9a" stroke-width="0.800"/></svg>
<div class="abs" style="left:5px;top:612.8px;width:232px;height:1px;background:#c6c6c6"></div>
<div class="abs" style="left:245.500px;top:548px;width:8px;height:39px;background:#f7f7f7;border:1px solid #b9b9b9;border-left:none"></div>
<svg class="abs" style="left:246.5px;top:564.5px" width="6" height="6" viewBox="0 0 6 6"><circle cx="3" cy="3" r="2" fill="#fff" stroke="#999" stroke-width="0.900"/></svg>
<svg class="abs" style="left:8.8px;top:621.0px" width="12" height="12" viewBox="0 0 12 12"><rect x="0.500" y="0.500" width="11" height="11" fill="#fff" stroke="#333" stroke-width="1"/></svg>
<div class="t " style="left:24.8px;top:621.1px;font-size:12px;color:#333;letter-spacing:-0.458px;-webkit-text-stroke:0.4px #3a3a3a;">Bodies</div>
<svg class="abs" style="left:223.3px;top:623.0px" width="12" height="8" viewBox="0 0 12 8"><path d="M1 1.5 L6 6.5 L11 1.500" fill="none" stroke="#484848" stroke-width="1.900"/></svg>
<div class="abs" style="left:5px;top:645px;width:232px;height:1px;background:#c6c6c6"></div>
<div class="t " style="left:8.8px;top:654.0px;font-size:12px;color:#333;letter-spacing:-0.236px;-webkit-text-stroke:0.4px #3a3a3a;">Instances to Skip</div>
<svg class="abs" style="left:223.3px;top:655.5px" width="12" height="8" viewBox="0 0 12 8"><path d="M1 1.5 L6 6.5 L11 1.500" fill="none" stroke="#484848" stroke-width="1.900"/></svg>
<div class="abs" style="left:5px;top:677.6px;width:232px;height:1px;background:#c6c6c6"></div>
<div class="t " style="left:8.8px;top:686.4px;font-size:12px;color:#333;letter-spacing:0.041px;-webkit-text-stroke:0.4px #3a3a3a;">Options</div>
<svg class="abs" style="left:223.3px;top:688.0px" width="12" height="8" viewBox="0 0 12 8"><path d="M1 6.5 L6 1.5 L11 6.5" fill="none" stroke="#484848" stroke-width="1.900"/></svg>
<svg class="abs" style="left:39.2px;top:707.0px" width="13" height="13" viewBox="0 0 13 13"><rect x="0.500" y="0.500" width="12" height="12" fill="#fff" stroke="#333" stroke-width="1"/><path d="M2.500 6.5 L5.5 10.0 L10.8 2.500" fill="none" stroke="#222" stroke-width="1.300"/></svg>
<div class="t " style="left:56.0px;top:708.5px;font-size:11.5px;color:#1a1a1a;letter-spacing:0.062px;text-decoration:none;">Geometry pattern</div>
<div class="abs" style="left:56.3px;top:720.2px;width:8.2px;height:1px;background:#1a1a1a"></div>
<svg class="abs" style="left:39.2px;top:731.0px" width="13" height="13" viewBox="0 0 13 13"><rect x="0.500" y="0.500" width="12" height="12" fill="#fff" stroke="#333" stroke-width="1"/><path d="M2.500 6.5 L5.5 10.0 L10.8 2.500" fill="none" stroke="#222" stroke-width="1.300"/></svg>
<div class="t " style="left:56.0px;top:731.9px;font-size:11.5px;color:#1a1a1a;letter-spacing:0.062px;">Propagate visual properties</div>
<div class="abs" style="left:56.3px;top:743.6px;width:6.3px;height:1px;background:#1a1a1a"></div>
<svg class="abs" style="left:39.0px;top:755.8px" width="14" height="14" viewBox="0 0 14 14"><circle cx="7" cy="7" r="6" fill="#fff" stroke="#333" stroke-width="1"/></svg>
<div class="t " style="left:56.0px;top:757.4px;font-size:11.5px;color:#1a1a1a;letter-spacing:0.059px;">Full preview</div>
<div class="abs" style="left:56.3px;top:769.1px;width:5.3px;height:1px;background:#1a1a1a"></div>
<svg class="abs" style="left:39.0px;top:777.0px" width="14" height="14" viewBox="0 0 14 14"><circle cx="7" cy="7" r="6" fill="#fff" stroke="#333" stroke-width="1"/><circle cx="7" cy="7" r="3.300" fill="#222"/></svg>
<div class="t " style="left:56.0px;top:778.6px;font-size:11.5px;color:#1a1a1a;letter-spacing:-0.030px;">Partial preview</div>
<div class="abs" style="left:72.4px;top:790.3px;width:3.2px;height:1px;background:#1a1a1a"></div>
<div class="abs" style="left:5px;top:802.8px;width:232px;height:1px;background:#c6c6c6"></div>
<svg class="abs" style="left:8.8px;top:811.0px" width="12" height="12" viewBox="0 0 12 12"><rect x="0.500" y="0.500" width="11" height="11" fill="#fff" stroke="#c4c4c4" stroke-width="1"/></svg>
<div class="t " style="left:26.0px;top:811.6px;font-size:12px;color:#333;letter-spacing:-0.239px;-webkit-text-stroke:0.4px #3a3a3a;">Instances to Vary</div>
<svg class="abs" style="left:223.3px;top:813.0px" width="12" height="8" viewBox="0 0 12 8"><path d="M1 1.5 L6 6.5 L11 1.500" fill="none" stroke="#484848" stroke-width="1.900"/></svg>
<svg class="abs" style="left:250.0px;top:150.5px" width="6" height="9" viewBox="0 0 6 9"><path d="M0.500 0.500 L5.500 4.500 L0.500 8.500Z" fill="#1a1a1a"/></svg>
<svg class="abs" style="left:268px;top:145.600px" width="20" height="20" viewBox="0 0 20 20"><g stroke="#8a6a08" stroke-width="0.9" stroke-linejoin="round"><path d="M1.7 5.9 L6 8.2 L6 10.8 L11.8 13.4 L11.8 18.8 L1.7 11.4Z" fill="#efc526"/><path d="M11.8 13.4 L18 9 L18 14.2 L11.8 18.8Z" fill="#d9a90f"/><path d="M6 10.8 L13.6 7 L18 9 L11.8 13.4Z" fill="#f9e06a"/><path d="M6 8.2 L13.6 3.2 L13.6 7 L6 10.8Z" fill="#d9a90f"/><path d="M9.4 1 L1.7 5.9 L6 8.2 L13.6 3.2Z" fill="#f9e06a"/></g></svg>
<div class="t " style="left:291.7px;top:150.6px;font-size:12px;color:#1a1a1a;letter-spacing:-0.064px;">Golf Ball (Default) &lt;&lt;Defa...</div>
<svg class="abs" style="left:913.5px;top:122.7px" width="20" height="20" viewBox="0 0 20 20"><path d="M8.6 12.6 L3 18" stroke="#3f7ea6" stroke-width="4" stroke-linecap="round"/><path d="M8.6 12.6 L3 18" stroke="#8cc3e4" stroke-width="2.400" stroke-linecap="round"/><circle cx="13" cy="7.5" r="6" fill="#f3f7fa" stroke="#828d96" stroke-width="1.500"/><path d="M13 3.600 L14.300 5.300 H11.700Z M13 11.400 L14.300 9.700 H11.700Z M9.100 7.500 L10.800 6.200 V8.800Z M16.900 7.500 L15.200 6.200 V8.800Z" fill="#555"/></svg>
<svg class="abs" style="left:940.0px;top:122.7px" width="20" height="20" viewBox="0 0 20 20"><path d="M8 1.500 H18.500 V13.500 H15" fill="none" stroke="#444" stroke-width="1.300" stroke-dasharray="2.600 1.800"/><path d="M7.6 13 L2.5 18" stroke="#3f7ea6" stroke-width="4" stroke-linecap="round"/><path d="M7.6 13 L2.5 18" stroke="#8cc3e4" stroke-width="2.400" stroke-linecap="round"/><circle cx="12" cy="8.5" r="6" fill="#f3f7fa" stroke="#828d96" stroke-width="1.500"/></svg>
<svg class="abs" style="left:965.4px;top:122.7px" width="22" height="20" viewBox="0 0 22 20"><path d="M2.500 13.500 L5.500 10.500 L15.500 2.500 C17 1.800 18.500 3.300 17.800 4.800 L9.800 15 L6.800 18Z" fill="#ececec" stroke="#666" stroke-width="1.100" stroke-linejoin="round"/><path d="M5.500 10.500 L9.800 15 M2.500 13.500 L6.800 18 M12 5.300 L15 8.300" stroke="#777" stroke-width="0.900"/><path d="M2.500 13.500 L6.800 18 L5 19.200 L1.300 15.300Z" fill="#bdbdbd" stroke="#666" stroke-width="0.800"/><path d="M21 15.500 H13.800 M16.800 12.300 L13.200 15.500 L16.800 18.700" stroke="#2f86b8" stroke-width="2.200" fill="none"/></svg>
<svg class="abs" style="left:992.8px;top:123.7px" width="20" height="18" viewBox="0 0 20 18"><path d="M1.500 5 L7 2 L10 6 L13 2 L18.500 4.500 V13 L13 16.500 L10 12 L7 16.500 L1.500 14Z" fill="#e9e9e9" stroke="#cfcfcf" stroke-width="1" stroke-linejoin="round"/></svg>
<svg class="abs" style="left:1017.2px;top:121.7px" width="22" height="22" viewBox="0 0 22 22"><g transform="translate(0 2)"><path d="M2.500 13.500 L5.500 10.500 L15.500 2.500 C17 1.800 18.500 3.300 17.800 4.800 L9.800 15 L6.800 18Z" fill="#ececec" stroke="#666" stroke-width="1.100" stroke-linejoin="round"/><path d="M5.500 10.500 L9.800 15 M2.500 13.500 L6.800 18 M12 5.300 L15 8.300" stroke="#777" stroke-width="0.900"/><path d="M2.500 13.500 L6.800 18 L5 19.200 L1.300 15.300Z" fill="#bdbdbd" stroke="#666" stroke-width="0.800"/></g><path d="M5.500 0.800 L11 0.800 L9 4.200 L12.500 4.200 L5 10.500 L7 5.800 L3.800 5.800Z" fill="#f6bb45" stroke="#d08a1a" stroke-width="0.700"/><text x="11.800" y="21.300" font-family="Liberation Serif,serif" font-size="13.500" font-weight="bold" fill="#2c6fa0">A</text></svg>
<svg class="abs" style="left:1045.6px;top:122.7px" width="20" height="20" viewBox="0 0 20 20"><path d="M1.500 6 L6.500 1.500 H18.500 V13.500 L13.500 18.500 H1.500Z" fill="#fff" stroke="#333" stroke-width="1.100" stroke-linejoin="round"/><path d="M1.500 6 H13.500 V18.500 M13.500 6 L18.500 1.500 M10 1.500 V6 M13.500 12 L18.500 7.500" fill="none" stroke="#333" stroke-width="0.900"/><rect x="1.500" y="6" width="12" height="12.500" fill="#79b9e0" stroke="#1f5f86" stroke-width="1.100"/></svg>
<svg class="abs" style="left:1070.8px;top:131.7px" width="8" height="5" viewBox="0 0 8 5"><path d="M1.2 0.5 H6.8 L4 3.3Z" fill="#8a8a8a"/></svg>
<svg class="abs" style="left:1086.4px;top:121.7px" width="20" height="22" viewBox="0 0 20 22"><path d="M2 5 L9 1.500 L18 4.500 V17 L10 20.500 L2 17Z" fill="#fff" stroke="#2a4a60" stroke-width="1.100" stroke-linejoin="round"/><path d="M2 5 L10 8 V20.500 L2 17Z" fill="#5aa6d4" stroke="#1f5f86" stroke-width="1"/><path d="M10 8 L18 4.500" stroke="#2a4a60" stroke-width="1"/><path d="M2 5 L9 1.500 L18 4.500 L10 8Z" fill="#a9d3ee" stroke="#2a4a60" stroke-width="0.900"/></svg>
<svg class="abs" style="left:1111.4px;top:131.7px" width="8" height="5" viewBox="0 0 8 5"><path d="M1.2 0.5 H6.8 L4 3.3Z" fill="#8a8a8a"/></svg>
<svg class="abs" style="left:1126.0px;top:125.2px" width="20" height="16" viewBox="0 0 20 16"><path d="M1 8.500 C5 2.500 15 2.500 19 8.500 C15 14 5 14 1 8.500Z" fill="#f2f2f2" stroke="#a8a8a8" stroke-width="1.300"/><circle cx="10" cy="8" r="4" fill="#6a6a6a"/><path d="M10 4 A4 4 0 0 1 10 12Z" fill="#b4b4b4"/><path d="M10 1 V15" stroke="#555" stroke-width="1.100"/></svg>
<svg class="abs" style="left:1151.9px;top:131.7px" width="8" height="5" viewBox="0 0 8 5"><path d="M1.2 0.5 H6.8 L4 3.3Z" fill="#8a8a8a"/></svg>
<svg class="abs" style="left:1165.4px;top:121.7px" width="22" height="22" viewBox="0 0 22 22"><circle cx="9" cy="8" r="7" fill="#ececec" stroke="#d6d6d6" stroke-width="1"/><path d="M11 13 L18 6.500 L21 9.500 L14 16.500 L10 18Z" fill="#e4e4e4" stroke="#d0d0d0" stroke-width="1"/></svg>
<svg class="abs" style="left:1191.5px;top:121.7px" width="22" height="22" viewBox="0 0 22 22"><path d="M2 12 H20 V21 H2Z" fill="#e9e9e9" stroke="#d4d4d4" stroke-width="1"/><circle cx="11" cy="9" r="7" fill="#ececec" stroke="#d4d4d4" stroke-width="1"/><path d="M5 21 L8.500 16 H13.500 L17 21" fill="#f4f4f4" stroke="#d4d4d4" stroke-width="1"/></svg>
<svg class="abs" style="left:1218.6px;top:131.7px" width="8" height="5" viewBox="0 0 8 5"><path d="M1.2 0.5 H6.8 L4 3.3Z" fill="#8a8a8a"/></svg>
<svg class="abs" style="left:1233.6px;top:125.0px" width="20" height="17" viewBox="0 0 20 17"><rect x="1" y="1" width="18" height="11.500" fill="#e2e2e2" stroke="#6a6a6a" stroke-width="1.200"/><rect x="2" y="2" width="16" height="1.600" fill="#cfcfcf"/><path d="M10 12.500 V15.300 M6.500 15.800 H13.500" stroke="#444" stroke-width="1.500"/></svg>
<svg class="abs" style="left:1259.2px;top:131.7px" width="8" height="5" viewBox="0 0 8 5"><path d="M1.2 0.5 H6.8 L4 3.3Z" fill="#8a8a8a"/></svg>
<svg class="abs" style="left:1809.0px;top:126.5px" width="13" height="14" viewBox="0 0 13 14"><rect x="0.600" y="0.600" width="11.800" height="12.800" fill="none" stroke="#a8a8a8" stroke-width="1.200"/><path d="M2.200 1 V13" stroke="#a8a8a8" stroke-width="0.800"/><path d="M6.500 4.500 L3.800 7 L6.500 9.500Z" fill="#a8a8a8"/></svg>
<svg class="abs" style="left:1835.5px;top:126.5px" width="13" height="14" viewBox="0 0 13 14"><rect x="0.600" y="0.600" width="11.800" height="12.800" fill="none" stroke="#a8a8a8" stroke-width="1.200"/><path d="M10.800 1 V13" stroke="#a8a8a8" stroke-width="0.800"/><path d="M6.500 4.500 L9.200 7 L6.500 9.500Z" fill="#a8a8a8"/></svg>
<div class="abs" style="left:1863px;top:137.500px;width:10px;height:1.500px;background:#a8a8a8"></div>
<svg class="abs" style="left:1887.5px;top:127.0px" width="15" height="13" viewBox="0 0 15 13"><path d="M4.500 4 V0.800 H14.200 V8.500 H11" fill="none" stroke="#a8a8a8" stroke-width="1.300"/><rect x="0.800" y="4.200" width="10" height="8" fill="none" stroke="#a8a8a8" stroke-width="1.300"/></svg>
<svg class="abs" style="left:1915.5px;top:128.0px" width="11" height="11" viewBox="0 0 11 11"><path d="M0.800 0.800 L10.200 10.200 M10.200 0.800 L0.800 10.200" stroke="#a8a8a8" stroke-width="1.300"/></svg>
<svg class="abs" style="left:1836.0px;top:154.2px" width="30" height="23" viewBox="0 0 30 23"><path d="M1.500 11.500 L5.500 8 L11 14 L25.500 1 L29 5 L11.500 21.500Z" fill="#c9e8c4"/></svg>
<svg class="abs" style="left:1881.8px;top:183.7px" width="25" height="24" viewBox="0 0 25 24"><path d="M1 4.500 L4.500 1 L12.500 8.500 L20.500 1 L24 4.500 L16.500 12 L24 19.500 L20.500 23 L12.500 15.500 L4.500 23 L1 19.500 L8.500 12Z" fill="#f6cccc"/></svg>
<div class="abs" style="left:1915px;top:170px;width:26px;height:169px;background:#d6d6d6;border:1px solid #9c9c9c;border-right:none"></div>
<div class="abs" style="left:1916px;top:171px;width:25px;height:22px;background:#f7f7f7"></div>
<div class="abs" style="left:1915px;top:193.3px;width:26px;height:1px;background:#a6a6a6"></div>
<div class="abs" style="left:1915px;top:217.4px;width:26px;height:1px;background:#a6a6a6"></div>
<div class="abs" style="left:1915px;top:242.1px;width:26px;height:1px;background:#a6a6a6"></div>
<div class="abs" style="left:1915px;top:266.2px;width:26px;height:1px;background:#a6a6a6"></div>
<div class="abs" style="left:1915px;top:290.2px;width:26px;height:1px;background:#a6a6a6"></div>
<div class="abs" style="left:1915px;top:314.3px;width:26px;height:1px;background:#a6a6a6"></div>
<svg class="abs" style="left:1917.3px;top:170.8px" width="22" height="22" viewBox="0 0 22 22"><defs><radialGradient id="tg1" cx="0.400" cy="0.350" r="0.700"><stop offset="0" stop-color="#5f9fd0"/><stop offset="0.600" stop-color="#1d5f95"/><stop offset="1" stop-color="#0b3358"/></radialGradient></defs><circle cx="11" cy="11" r="10" fill="url(#tg1)"/><path d="M9 7.500 L14.500 11 L9 14.500Z" fill="none" stroke="#d8e8f4" stroke-width="1"/><circle cx="11" cy="11" r="6.500" fill="none" stroke="#9cc4e2" stroke-width="0.700"/></svg>
<svg class="abs" style="left:1918.3px;top:196.0px" width="20" height="20" viewBox="0 0 20 20"><path d="M1.500 10 L10 2 L18.500 10" fill="none" stroke="#1d4e78" stroke-width="2.200" stroke-linejoin="round"/><path d="M4 9.500 V18 H16 V9.500" fill="#fff" stroke="#1d4e78" stroke-width="1.600"/><path d="M8 18 V12.500 H12 V18" fill="none" stroke="#333" stroke-width="1.300"/></svg>
<svg class="abs" style="left:1919.3px;top:219.0px" width="18" height="22" viewBox="0 0 18 22"><path d="M2 5.500 L6 3 V17.500 L2 15Z M6 3 L9 5 V19.500 L6 17.500Z M9 5 L11 3 L14 5 V19.500 L11 21 L9 19.500Z M14 5 L16.500 4 V17.500 L14 19.500Z" fill="#f4f4f4" stroke="#333" stroke-width="1" stroke-linejoin="round"/><path d="M11 3 V21" stroke="#333" stroke-width="0.800"/></svg>
<svg class="abs" style="left:1917.3px;top:245.3px" width="22" height="18" viewBox="0 0 22 18"><path d="M1.500 16.500 V2 H8 L9.500 4 H17 V7" fill="#f4f4f4" stroke="#333" stroke-width="1.200" stroke-linejoin="round"/><path d="M1.500 16.500 L5.500 7 H21 L17 16.500Z" fill="#fdfdfd" stroke="#333" stroke-width="1.200" stroke-linejoin="round"/></svg>
<svg class="abs" style="left:1918.3px;top:269.3px" width="20" height="18" viewBox="0 0 20 18"><rect x="1" y="1" width="18" height="16" rx="1.500" fill="#fff" stroke="#333" stroke-width="1.200"/><path d="M3.500 4 H12 V7 H9.500 V10.500 H13 V14 H3.500 V10.500 H6.500 V7 H3.500Z" fill="#f2c62a" stroke="#8a6a08" stroke-width="0.800"/><rect x="14.200" y="3.500" width="2.800" height="3" fill="#f2c62a" stroke="#8a6a08" stroke-width="0.700"/><rect x="14.500" y="9" width="2.500" height="5.500" fill="#bbb" stroke="#555" stroke-width="0.700"/></svg>
<svg class="abs" style="left:1918.3px;top:292.3px" width="20" height="20" viewBox="0 0 20 20"><defs><clipPath id="bc2"><circle cx="10" cy="10" r="8.800"/></clipPath></defs><g clip-path="url(#bc2)"><rect width="20" height="20" fill="#e6352b"/><path d="M0 0 H11 V9 H0Z" fill="#3a78dc"/><path d="M0 9 L11 9 L9 20 H0Z" fill="#47b04b"/><path d="M11 9 L20 12 V20 H9Z" fill="#f4c020"/></g><circle cx="10" cy="10" r="8.800" fill="none" stroke="#8a8a8a" stroke-width="0.800"/><ellipse cx="7.500" cy="6" rx="3.500" ry="2.200" fill="#fff" opacity="0.450"/></svg>
<svg class="abs" style="left:1918.3px;top:317.5px" width="20" height="19" viewBox="0 0 20 19"><rect x="1" y="1" width="18" height="17" rx="1" fill="#fff" stroke="#1f4f76" stroke-width="1.300"/><rect x="1" y="1" width="18" height="3.300" fill="#3d8dbb" stroke="#1f4f76" stroke-width="1"/><g fill="#3d8dbb" stroke="#1f4f76" stroke-width="0.800"><rect x="3.200" y="6.500" width="3.500" height="2.400"/><rect x="3.200" y="10.300" width="3.500" height="2.400"/><rect x="3.200" y="14.100" width="3.500" height="2.400"/></g><path d="M8.500 7.700 H16.500 M8.500 11.500 H16.500 M8.500 15.300 H16.500" stroke="#222" stroke-width="1.300"/></svg>
<div class="abs" style="left:1164.500px;top:448.500px;width:136px;height:79.500px;background:#f5f5f5;border:1px solid #f0f0f4;border-radius:2px"></div>
<div class="abs" style="left:1165.500px;top:449.500px;width:134px;height:77.500px;background:#f5f5f5;border:1px solid #2a2a2a"></div>
<div class="abs" style="left:1225.500px;top:475px;width:74px;height:52px;background:#fff;border:1px solid #2a2a2a"></div>
<div class="t " style="left:1206.7px;top:457.9px;font-size:11.5px;color:#1a1a1a;letter-spacing:0.054px;">Direction 1</div>
<div class="t " style="left:1173.2px;top:483.1px;font-size:11.5px;color:#1a1a1a;letter-spacing:-0.193px;">Spacing:</div>
<div class="t " style="left:1173.2px;top:508.2px;font-size:11.5px;color:#1a1a1a;letter-spacing:-0.202px;">Instances:</div>
<div class="t " style="left:1230.8px;top:483.1px;font-size:11.5px;color:#1a1a1a;letter-spacing:-0.234px;">360deg</div>
<div class="t " style="left:1230.8px;top:508.2px;font-size:11.5px;color:#1a1a1a;">6</div>
<svg class="abs" style="left:1282.2px;top:480.3px" width="13.5" height="16.5" viewBox="0 0 13.5 16.5"><rect x="0.500" y="0.500" width="12.5" height="15.5" fill="#f0f0f0" stroke="#b4b4b4"/><path d="M0.500 8.25 H13" stroke="#b4b4b4"/><path d="M3.75 6 L6.75 2.800 L9.75 6Z M3.75 10.5 L6.75 13.7 L9.75 10.5Z" fill="#222"/></svg>
<svg class="abs" style="left:1282.2px;top:505.5px" width="13.5" height="16.5" viewBox="0 0 13.5 16.5"><rect x="0.500" y="0.500" width="12.5" height="15.5" fill="#f0f0f0" stroke="#b4b4b4"/><path d="M0.500 8.25 H13" stroke="#b4b4b4"/><path d="M3.75 6 L6.75 2.800 L9.75 6Z M3.75 10.5 L6.75 13.7 L9.75 10.5Z" fill="#222"/></svg>
<svg class="abs" style="left:0;top:0" width="1941" height="1051" viewBox="0 0 1941 1051">
<path d="M1055.500 613.700 L1119.600 587 L1121.100 603.700 L1315.900 587.800 L1316.400 600.100 L1122.700 614.800 L1123.500 631Z" fill="#ff9933"/>
<path d="M1054 516 L1167 488.600" stroke="#222" stroke-width="2.600"/><path d="M1054 516 L1167 488.600" stroke="#fff" stroke-width="1.200"/>
<circle cx="1053.800" cy="516" r="3" fill="#e8e8ee" stroke="#222" stroke-width="1.200"/><circle cx="1167" cy="488.600" r="3" fill="#f5f5f5" stroke="#222" stroke-width="1.200"/>
<rect x="1049.500" y="316" width="8" height="8" fill="#5ab4ee" stroke="#10365a" stroke-width="1.300"/>
<rect x="1049.500" y="707.800" width="8" height="8" fill="#5ab4ee" stroke="#10365a" stroke-width="1.300"/>
<path d="M1051.200 325 H1055.800 V329 H1051.200Z" fill="#8a8a8a"/><ellipse cx="1053.500" cy="332" rx="5" ry="2.800" fill="#c8c8c8" stroke="#9a9a9a" stroke-width="0.600"/><path d="M1049.500 334.500 L1053.500 339 L1057.500 334.500Z" fill="#555"/>
<path d="M988 369.400 H995 M991.500 366 V373" stroke="#8fd0ff" stroke-width="1"/>
<path d="M1285.500 540 L1290 535.800 L1294.500 540" fill="none" stroke="#b9bdcd" stroke-width="1.400"/>
<path d="M1056 545.500 L1056 561.500 L1059.800 558 L1062.600 564.200 L1065 563.100 L1062.300 557.100 L1067.500 556.800Z" fill="#fff" stroke="#222" stroke-width="1.100" stroke-linejoin="round"/>
<rect x="1071.700" y="557.500" width="3.800" height="18" rx="1.900" fill="#6fd0f0" stroke="#1a4a66" stroke-width="1"/>
<path d="M286 957 L271 965.700" stroke="#2222c8" stroke-width="3.800"/><path d="M264.500 969.800 L272.500 960.800 L276.500 967.800 L271 970Z" fill="#3a3ae0"/>
<path d="M286 957 L300.500 965.500" stroke="#b02626" stroke-width="3.800"/><path d="M307.500 970 L299.800 960.800 L295.800 967.800 L301 970.200Z" fill="#e24444"/>
<path d="M286 957.500 V942" stroke="#1c6e2a" stroke-width="3.800"/><path d="M286 933.800 L280.800 941.200 L283 943.500 H289 L291.200 941.200Z" fill="#2a8c3a"/>
</svg>
<div class="t " style="left:282.2px;top:922.7px;font-size:11.5px;color:#2f9a3f;">Y</div>
<div class="t " style="left:307.3px;top:966.7px;font-size:11px;color:#e04040;">X</div>
<div class="t " style="left:258.5px;top:966.7px;font-size:11px;color:#3a3ad8;">Z</div>
<div class="t " style="left:257.0px;top:1000.7px;font-size:12px;color:#111;letter-spacing:0.775px;font-weight:bold;">*Isometric</div>
<div id="btabs"></div><div id="status"></div>
<div class="abs" style="left:247px;top:1016.500px;width:1693px;height:16px;border:1px solid #b2b2b2;border-left:none;border-bottom:none;background:#f6f6f6"></div>
<div class="abs" style="left:1.500px;top:1016.500px;width:65.500px;height:15.500px;background:#c8c8c8;border-top:1.500px solid #858585"></div>
<svg class="abs" style="left:5.5px;top:1020px" width="8" height="10" viewBox="0 0 8 10"><path d="M1 1 V9 M7 1 L2.500 5 L7 9Z" fill="#b4b4b4" stroke="#b4b4b4" stroke-width="1"/></svg>
<div class="abs" style="left:17.5px;top:1018px;width:1px;height:13px;background:#bdbdbd"></div>
<svg class="abs" style="left:21.5px;top:1020px" width="8" height="10" viewBox="0 0 8 10"><path d="M6.500 1 L2 5 L6.500 9Z" fill="#b4b4b4"/></svg>
<div class="abs" style="left:33.5px;top:1018px;width:1px;height:13px;background:#bdbdbd"></div>
<svg class="abs" style="left:38px;top:1020px" width="8" height="10" viewBox="0 0 8 10"><path d="M1.500 1 L6 5 L1.500 9Z" fill="#b4b4b4"/></svg>
<div class="abs" style="left:50px;top:1018px;width:1px;height:13px;background:#bdbdbd"></div>
<svg class="abs" style="left:54px;top:1020px" width="8" height="10" viewBox="0 0 8 10"><path d="M7 1 V9 M1 1 L5.500 5 L1 9Z" fill="#b4b4b4" stroke="#b4b4b4" stroke-width="1"/></svg>
<div class="abs" style="left:67px;top:1017.500px;width:57.500px;height:15px;background:#fcfcfc"></div>
<div class="abs" style="left:124.500px;top:1017.500px;width:178.500px;height:14.500px;background:#d5d5d5;border:1px solid #ababab;border-top:none"></div>
<div class="abs" style="left:193.500px;top:1017.500px;width:1px;height:14.500px;background:#ababab"></div>
<div class="t " style="left:80.0px;top:1017.4px;font-size:12px;color:#111;letter-spacing:0.185px;font-weight:bold;">Model</div>
<div class="t " style="left:135.2px;top:1017.4px;font-size:12px;color:#1a1a1a;letter-spacing:-0.409px;">3D Views</div>
<div class="t " style="left:203.8px;top:1017.4px;font-size:12px;color:#1a1a1a;letter-spacing:0.074px;">Motion Study 1</div>
<div class="t " style="left:1.8px;top:1036.9px;font-size:12px;color:#1a1a1a;letter-spacing:-0.056px;">Select edge or axis for direction reference, select face of feature for pattern features</div>
<div class="t " style="left:1653.0px;top:1037.0px;font-size:12px;color:#1a1a1a;letter-spacing:-0.057px;">Editing Part</div>
<svg class="abs" style="left:1742px;top:1033.500px" width="18" height="17" viewBox="0 0 18 17"><path d="M5.500 1 L10.500 9.500 H0.500Z" fill="#f2c62a" stroke="#8a6a08" stroke-width="0.800"/><path d="M5.500 4 V7 M5.500 8 V8.800" stroke="#222" stroke-width="1"/><path d="M9 8 L14 3 M14 3 H10.500 M14 3 V6.500" stroke="#111" stroke-width="1.800" fill="none"/><path d="M2 15.500 V13.500 M5 15.500 V12.500 M8 15.500 V11.500 M11 15.500 V9.500" stroke="#2c6fa0" stroke-width="1.800"/></svg>
<div class="t " style="left:1834.0px;top:1037.0px;font-size:12px;color:#b2b2b2;letter-spacing:-0.110px;">MMGS</div>
<svg class="abs" style="left:1888.500px;top:1041px" width="7" height="5" viewBox="0 0 7 5"><path d="M0.500 4.500 L3.500 1 L6.500 4.500Z" fill="#9a9a9a"/></svg>
<svg class="abs" style="left:1920.500px;top:1033.500px" width="18" height="16" viewBox="0 0 18 16"><path d="M1 6 L10 1 L17 5.500 L8.500 11.500Z" fill="#f4f4f4" stroke="#333" stroke-width="1.100" stroke-linejoin="round"/><path d="M1 6 V9 L8.500 14.500 L17 8.500 V5.500" fill="#ddd" stroke="#333" stroke-width="1.100" stroke-linejoin="round"/><path d="M6 6 L10 3.500 L12.500 5.500 L9 8Z" fill="none" stroke="#333" stroke-width="0.900"/></svg>
</body></html>
